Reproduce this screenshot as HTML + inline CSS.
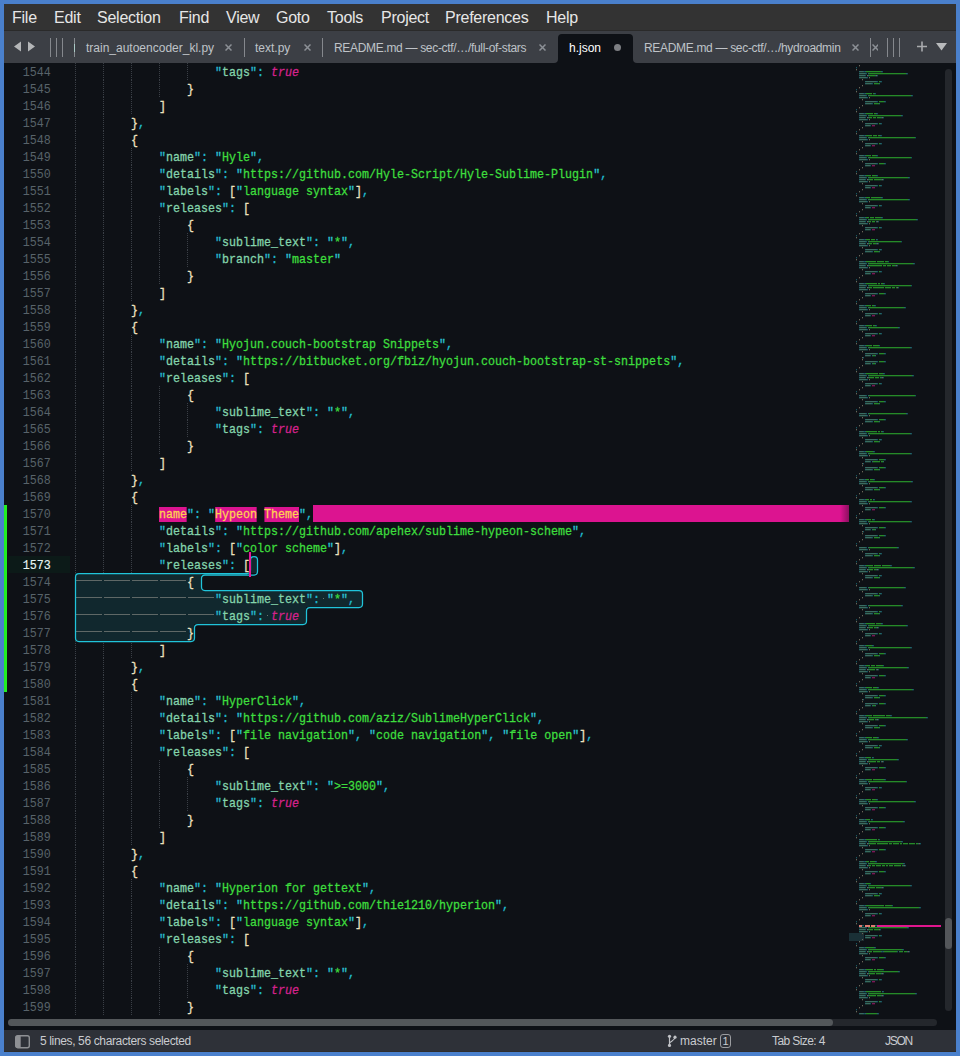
<!DOCTYPE html>
<html><head><meta charset="utf-8">
<style>
html,body{margin:0;padding:0}
body{width:960px;height:1056px;background:#4a80cc;position:relative;overflow:hidden;font-family:"Liberation Sans",sans-serif}
.abs{position:absolute}
#menu{left:4px;top:4px;width:952px;height:26px;background:#333333;border-bottom:1px solid #2a2a2a}
#menu span{position:absolute;top:5px;font-size:16px;letter-spacing:-0.25px;line-height:18px;color:#e6e6e6;white-space:nowrap}
#tabs{left:4px;top:31px;width:952px;height:32px;background:#3c3f45}
.tt{position:absolute;top:10px;font-size:12px;line-height:14px;color:#bfc3c8;white-space:nowrap}
.x{position:absolute;top:13px;width:7px;height:7px;overflow:hidden}.x path{stroke:#8c9096;stroke-width:1.5;fill:none}
.rd{letter-spacing:-0.32px}
.sep{position:absolute;top:7px;width:1px;height:19px;background:#85888d}
#active{left:554px;top:3px;width:75px;height:29px;background:#0e1116;border-radius:4px 4px 0 0}
#editor{left:4px;top:63px;width:952px;height:967px;background:#0e1116;overflow:hidden}
#status{left:4px;top:1030px;width:952px;height:21px;background:#2e3138;border-bottom:1px solid #2f2d2b}
.st{position:absolute;top:4px;font-size:12px;line-height:14px;color:#c9cbcf;white-space:nowrap}
/* code */
.ln{position:absolute;height:17px;line-height:17px;font-family:"Liberation Mono",monospace;font-size:13.5px;transform-origin:0 0;transform:translateY(1px) scaleX(0.86420);white-space:pre;-webkit-text-stroke:0.3px currentColor;color:#dfe6e0}
.ln i{font-style:normal}
.k{color:#84d4ac}
.kq{color:#26bfd2}
.p{color:#20bcd0}
.b{color:#eee2c0}
.sq{color:#2cc4d4}
.s{color:#3ede3e}
.ln i.t{color:#d4228c;font-style:italic}
.hl{background:#dc1490;color:#ffd250}
.num{position:absolute;left:-6.86px;width:57.86px;text-align:right;height:17px;line-height:17px;font-family:"Liberation Mono",monospace;font-size:13.5px;color:#58636a;transform-origin:100% 0;transform:translateY(1px) scaleX(0.8642)}
.num.cur{color:#e8f6f6;-webkit-text-stroke:0.15px currentColor}
.g{position:absolute;width:1px;height:17px;background-image:linear-gradient(#3a3f46 50%,transparent 50%);background-size:1px 2px}
.tabl{position:absolute;width:26px;height:1px;background:#5f6866}
.dot{position:absolute;width:1px;height:1px;background:#6a7470}
#mm b{position:absolute;height:2px;display:block}
.mk{background:linear-gradient(#3a6c60 50%,#1a302c 50%)}.mkq{background:linear-gradient(#2a6468 50%,#16302f 50%)}.mp{background:linear-gradient(#165660 50%,#0f2a30 50%)}.mb{background:linear-gradient(#6a675a 50%,#2e2e2a 50%)}.msq{background:linear-gradient(#2a6468 50%,#16302f 50%)}.ms{background:linear-gradient(#268a28 50%,#12381a 50%)}.mt{background:linear-gradient(#7a1a58 50%,#380e2c 50%)}.mhlm{background:#e07a70}
#mm b.mhl{background:#e0168e;height:2px}
#mm b.msel{background:#1a3036}
</style></head><body>
<div id="menu" class="abs">
<span style="left:8px">File</span>
<span style="left:50px">Edit</span>
<span style="left:93px">Selection</span>
<span style="left:175px">Find</span>
<span style="left:222px">View</span>
<span style="left:272px">Goto</span>
<span style="left:323px">Tools</span>
<span style="left:377px">Project</span>
<span style="left:441px">Preferences</span>
<span style="left:542px">Help</span>
</div>
<div id="tabs" class="abs">
<div class="abs" style="left:548px;top:18px;width:87px;height:14px;background:#0e1116"></div>
<div class="abs" style="left:0;top:0;width:554px;height:32px;background:#3c3f45;border-bottom-right-radius:4px"></div>
<div class="abs" style="left:629px;top:0;width:323px;height:32px;background:#3c3f45;border-bottom-left-radius:4px"></div>
<div id="active" class="abs"></div>
<svg class="abs" style="left:10px;top:10px" width="24" height="12"><path d="M0,5.5 L7,0.5 L7,10.5 Z M14,0.5 L21,5.5 L14,10.5 Z" fill="#b4b6b8"/></svg>
<div class="sep" style="left:46px"></div><div class="sep" style="left:52px"></div><div class="sep" style="left:58px"></div><div class="sep" style="left:70px"></div>
<div class="abs" style="left:70px;top:13px;width:1px;height:8px;background:#a9c9c4"></div>
<div class="tt" style="left:82px">train_autoencoder_kl.py</div><svg class="x" style="left:221px"><path d="M0.5,0.5 L6.5,6.5 M6.5,0.5 L0.5,6.5"/></svg>
<div class="sep" style="left:240px"></div>
<div class="tt" style="left:251px">text.py</div><svg class="x" style="left:300px"><path d="M0.5,0.5 L6.5,6.5 M6.5,0.5 L0.5,6.5"/></svg>
<div class="sep" style="left:318px"></div>
<div class="tt rd" style="left:330px">README.md — sec-ctf/…/full-of-stars</div><svg class="x" style="left:535px"><path d="M0.5,0.5 L6.5,6.5 M6.5,0.5 L0.5,6.5"/></svg>
<div class="tt" style="left:565px;color:#fff">h.json</div>
<div class="abs" style="left:610px;top:13px;width:7px;height:7px;border-radius:50%;background:#7d7f83"></div>
<div class="tt rd" style="left:640px">README.md — sec-ctf/…/hydroadmin</div><svg class="x" style="left:848px"><path d="M0.5,0.5 L6.5,6.5 M6.5,0.5 L0.5,6.5"/></svg>
<div class="sep" style="left:866px"></div><svg class="x" style="left:868px;width:6px"><path d="M0.5,0.5 L6.5,6.5 M6.5,0.5 L0.5,6.5"/></svg>
<div class="sep" style="left:883px"></div><div class="sep" style="left:889px"></div><div class="sep" style="left:895px"></div>
<svg class="abs" style="left:913px;top:10px" width="40" height="14"><path d="M5,0.5 V10.5 M0,5.5 H10" stroke="#a8aaad" stroke-width="1.6"/><path d="M19,2 L30,2 L24.5,9.5 Z" fill="#b8babc"/></svg>
</div>
<div id="editor" class="abs">
 <div class="abs" style="left:0;top:0;width:952px;height:967px;transform:translate(-4px,-63px)">
  <div class="abs" style="left:4px;top:505px;width:3px;height:187px;background:#22ee22"></div>
  <div class="abs" style="left:8px;top:556px;width:62px;height:17px;background:#0c1a18"></div>
  <div class="num" style="top:63px">1544</div>
<div class="num" style="top:80px">1545</div>
<div class="num" style="top:97px">1546</div>
<div class="num" style="top:114px">1547</div>
<div class="num" style="top:131px">1548</div>
<div class="num" style="top:148px">1549</div>
<div class="num" style="top:165px">1550</div>
<div class="num" style="top:182px">1551</div>
<div class="num" style="top:199px">1552</div>
<div class="num" style="top:216px">1553</div>
<div class="num" style="top:233px">1554</div>
<div class="num" style="top:250px">1555</div>
<div class="num" style="top:267px">1556</div>
<div class="num" style="top:284px">1557</div>
<div class="num" style="top:301px">1558</div>
<div class="num" style="top:318px">1559</div>
<div class="num" style="top:335px">1560</div>
<div class="num" style="top:352px">1561</div>
<div class="num" style="top:369px">1562</div>
<div class="num" style="top:386px">1563</div>
<div class="num" style="top:403px">1564</div>
<div class="num" style="top:420px">1565</div>
<div class="num" style="top:437px">1566</div>
<div class="num" style="top:454px">1567</div>
<div class="num" style="top:471px">1568</div>
<div class="num" style="top:488px">1569</div>
<div class="num" style="top:505px">1570</div>
<div class="num" style="top:522px">1571</div>
<div class="num" style="top:539px">1572</div>
<div class="num cur" style="top:556px">1573</div>
<div class="num" style="top:573px">1574</div>
<div class="num" style="top:590px">1575</div>
<div class="num" style="top:607px">1576</div>
<div class="num" style="top:624px">1577</div>
<div class="num" style="top:641px">1578</div>
<div class="num" style="top:658px">1579</div>
<div class="num" style="top:675px">1580</div>
<div class="num" style="top:692px">1581</div>
<div class="num" style="top:709px">1582</div>
<div class="num" style="top:726px">1583</div>
<div class="num" style="top:743px">1584</div>
<div class="num" style="top:760px">1585</div>
<div class="num" style="top:777px">1586</div>
<div class="num" style="top:794px">1587</div>
<div class="num" style="top:811px">1588</div>
<div class="num" style="top:828px">1589</div>
<div class="num" style="top:845px">1590</div>
<div class="num" style="top:862px">1591</div>
<div class="num" style="top:879px">1592</div>
<div class="num" style="top:896px">1593</div>
<div class="num" style="top:913px">1594</div>
<div class="num" style="top:930px">1595</div>
<div class="num" style="top:947px">1596</div>
<div class="num" style="top:964px">1597</div>
<div class="num" style="top:981px">1598</div>
<div class="num" style="top:998px">1599</div>
  <div class="g" style="top:63px;left:75px"></div>
<div class="g" style="top:63px;left:103px"></div>
<div class="g" style="top:63px;left:131px"></div>
<div class="g" style="top:63px;left:159px"></div>
<div class="g" style="top:63px;left:187px"></div>
<div class="g" style="top:80px;left:75px"></div>
<div class="g" style="top:80px;left:103px"></div>
<div class="g" style="top:80px;left:131px"></div>
<div class="g" style="top:80px;left:159px"></div>
<div class="g" style="top:97px;left:75px"></div>
<div class="g" style="top:97px;left:103px"></div>
<div class="g" style="top:97px;left:131px"></div>
<div class="g" style="top:114px;left:75px"></div>
<div class="g" style="top:114px;left:103px"></div>
<div class="g" style="top:131px;left:75px"></div>
<div class="g" style="top:131px;left:103px"></div>
<div class="g" style="top:148px;left:75px"></div>
<div class="g" style="top:148px;left:103px"></div>
<div class="g" style="top:148px;left:131px"></div>
<div class="g" style="top:165px;left:75px"></div>
<div class="g" style="top:165px;left:103px"></div>
<div class="g" style="top:165px;left:131px"></div>
<div class="g" style="top:182px;left:75px"></div>
<div class="g" style="top:182px;left:103px"></div>
<div class="g" style="top:182px;left:131px"></div>
<div class="g" style="top:199px;left:75px"></div>
<div class="g" style="top:199px;left:103px"></div>
<div class="g" style="top:199px;left:131px"></div>
<div class="g" style="top:216px;left:75px"></div>
<div class="g" style="top:216px;left:103px"></div>
<div class="g" style="top:216px;left:131px"></div>
<div class="g" style="top:216px;left:159px"></div>
<div class="g" style="top:233px;left:75px"></div>
<div class="g" style="top:233px;left:103px"></div>
<div class="g" style="top:233px;left:131px"></div>
<div class="g" style="top:233px;left:159px"></div>
<div class="g" style="top:233px;left:187px"></div>
<div class="g" style="top:250px;left:75px"></div>
<div class="g" style="top:250px;left:103px"></div>
<div class="g" style="top:250px;left:131px"></div>
<div class="g" style="top:250px;left:159px"></div>
<div class="g" style="top:250px;left:187px"></div>
<div class="g" style="top:267px;left:75px"></div>
<div class="g" style="top:267px;left:103px"></div>
<div class="g" style="top:267px;left:131px"></div>
<div class="g" style="top:267px;left:159px"></div>
<div class="g" style="top:284px;left:75px"></div>
<div class="g" style="top:284px;left:103px"></div>
<div class="g" style="top:284px;left:131px"></div>
<div class="g" style="top:301px;left:75px"></div>
<div class="g" style="top:301px;left:103px"></div>
<div class="g" style="top:318px;left:75px"></div>
<div class="g" style="top:318px;left:103px"></div>
<div class="g" style="top:335px;left:75px"></div>
<div class="g" style="top:335px;left:103px"></div>
<div class="g" style="top:335px;left:131px"></div>
<div class="g" style="top:352px;left:75px"></div>
<div class="g" style="top:352px;left:103px"></div>
<div class="g" style="top:352px;left:131px"></div>
<div class="g" style="top:369px;left:75px"></div>
<div class="g" style="top:369px;left:103px"></div>
<div class="g" style="top:369px;left:131px"></div>
<div class="g" style="top:386px;left:75px"></div>
<div class="g" style="top:386px;left:103px"></div>
<div class="g" style="top:386px;left:131px"></div>
<div class="g" style="top:386px;left:159px"></div>
<div class="g" style="top:403px;left:75px"></div>
<div class="g" style="top:403px;left:103px"></div>
<div class="g" style="top:403px;left:131px"></div>
<div class="g" style="top:403px;left:159px"></div>
<div class="g" style="top:403px;left:187px"></div>
<div class="g" style="top:420px;left:75px"></div>
<div class="g" style="top:420px;left:103px"></div>
<div class="g" style="top:420px;left:131px"></div>
<div class="g" style="top:420px;left:159px"></div>
<div class="g" style="top:420px;left:187px"></div>
<div class="g" style="top:437px;left:75px"></div>
<div class="g" style="top:437px;left:103px"></div>
<div class="g" style="top:437px;left:131px"></div>
<div class="g" style="top:437px;left:159px"></div>
<div class="g" style="top:454px;left:75px"></div>
<div class="g" style="top:454px;left:103px"></div>
<div class="g" style="top:454px;left:131px"></div>
<div class="g" style="top:471px;left:75px"></div>
<div class="g" style="top:471px;left:103px"></div>
<div class="g" style="top:488px;left:75px"></div>
<div class="g" style="top:488px;left:103px"></div>
<div class="g" style="top:505px;left:75px"></div>
<div class="g" style="top:505px;left:103px"></div>
<div class="g" style="top:505px;left:131px"></div>
<div class="g" style="top:522px;left:75px"></div>
<div class="g" style="top:522px;left:103px"></div>
<div class="g" style="top:522px;left:131px"></div>
<div class="g" style="top:539px;left:75px"></div>
<div class="g" style="top:539px;left:103px"></div>
<div class="g" style="top:539px;left:131px"></div>
<div class="g" style="top:556px;left:75px"></div>
<div class="g" style="top:556px;left:103px"></div>
<div class="g" style="top:556px;left:131px"></div>
<div class="g" style="top:573px;left:75px"></div>
<div class="g" style="top:573px;left:103px"></div>
<div class="g" style="top:573px;left:131px"></div>
<div class="g" style="top:573px;left:159px"></div>
<div class="g" style="top:590px;left:75px"></div>
<div class="g" style="top:590px;left:103px"></div>
<div class="g" style="top:590px;left:131px"></div>
<div class="g" style="top:590px;left:159px"></div>
<div class="g" style="top:590px;left:187px"></div>
<div class="g" style="top:607px;left:75px"></div>
<div class="g" style="top:607px;left:103px"></div>
<div class="g" style="top:607px;left:131px"></div>
<div class="g" style="top:607px;left:159px"></div>
<div class="g" style="top:607px;left:187px"></div>
<div class="g" style="top:624px;left:75px"></div>
<div class="g" style="top:624px;left:103px"></div>
<div class="g" style="top:624px;left:131px"></div>
<div class="g" style="top:624px;left:159px"></div>
<div class="g" style="top:641px;left:75px"></div>
<div class="g" style="top:641px;left:103px"></div>
<div class="g" style="top:641px;left:131px"></div>
<div class="g" style="top:658px;left:75px"></div>
<div class="g" style="top:658px;left:103px"></div>
<div class="g" style="top:675px;left:75px"></div>
<div class="g" style="top:675px;left:103px"></div>
<div class="g" style="top:692px;left:75px"></div>
<div class="g" style="top:692px;left:103px"></div>
<div class="g" style="top:692px;left:131px"></div>
<div class="g" style="top:709px;left:75px"></div>
<div class="g" style="top:709px;left:103px"></div>
<div class="g" style="top:709px;left:131px"></div>
<div class="g" style="top:726px;left:75px"></div>
<div class="g" style="top:726px;left:103px"></div>
<div class="g" style="top:726px;left:131px"></div>
<div class="g" style="top:743px;left:75px"></div>
<div class="g" style="top:743px;left:103px"></div>
<div class="g" style="top:743px;left:131px"></div>
<div class="g" style="top:760px;left:75px"></div>
<div class="g" style="top:760px;left:103px"></div>
<div class="g" style="top:760px;left:131px"></div>
<div class="g" style="top:760px;left:159px"></div>
<div class="g" style="top:777px;left:75px"></div>
<div class="g" style="top:777px;left:103px"></div>
<div class="g" style="top:777px;left:131px"></div>
<div class="g" style="top:777px;left:159px"></div>
<div class="g" style="top:777px;left:187px"></div>
<div class="g" style="top:794px;left:75px"></div>
<div class="g" style="top:794px;left:103px"></div>
<div class="g" style="top:794px;left:131px"></div>
<div class="g" style="top:794px;left:159px"></div>
<div class="g" style="top:794px;left:187px"></div>
<div class="g" style="top:811px;left:75px"></div>
<div class="g" style="top:811px;left:103px"></div>
<div class="g" style="top:811px;left:131px"></div>
<div class="g" style="top:811px;left:159px"></div>
<div class="g" style="top:828px;left:75px"></div>
<div class="g" style="top:828px;left:103px"></div>
<div class="g" style="top:828px;left:131px"></div>
<div class="g" style="top:845px;left:75px"></div>
<div class="g" style="top:845px;left:103px"></div>
<div class="g" style="top:862px;left:75px"></div>
<div class="g" style="top:862px;left:103px"></div>
<div class="g" style="top:879px;left:75px"></div>
<div class="g" style="top:879px;left:103px"></div>
<div class="g" style="top:879px;left:131px"></div>
<div class="g" style="top:896px;left:75px"></div>
<div class="g" style="top:896px;left:103px"></div>
<div class="g" style="top:896px;left:131px"></div>
<div class="g" style="top:913px;left:75px"></div>
<div class="g" style="top:913px;left:103px"></div>
<div class="g" style="top:913px;left:131px"></div>
<div class="g" style="top:930px;left:75px"></div>
<div class="g" style="top:930px;left:103px"></div>
<div class="g" style="top:930px;left:131px"></div>
<div class="g" style="top:947px;left:75px"></div>
<div class="g" style="top:947px;left:103px"></div>
<div class="g" style="top:947px;left:131px"></div>
<div class="g" style="top:947px;left:159px"></div>
<div class="g" style="top:964px;left:75px"></div>
<div class="g" style="top:964px;left:103px"></div>
<div class="g" style="top:964px;left:131px"></div>
<div class="g" style="top:964px;left:159px"></div>
<div class="g" style="top:964px;left:187px"></div>
<div class="g" style="top:981px;left:75px"></div>
<div class="g" style="top:981px;left:103px"></div>
<div class="g" style="top:981px;left:131px"></div>
<div class="g" style="top:981px;left:159px"></div>
<div class="g" style="top:981px;left:187px"></div>
<div class="g" style="top:998px;left:75px"></div>
<div class="g" style="top:998px;left:103px"></div>
<div class="g" style="top:998px;left:131px"></div>
<div class="g" style="top:998px;left:159px"></div>
  <svg class="abs" style="left:0;top:0" width="960" height="1056">
   <g fill="#11282e"><rect x="250" y="556" width="7" height="17"/><rect x="75" y="573" width="126" height="17"/><rect x="75" y="590" width="287" height="17"/><rect x="75" y="607" width="231" height="17"/><rect x="75" y="624" width="119" height="17"/></g>
  </svg>
  <div class="tabl" style="top:580px;left:76px"></div>
<div class="tabl" style="top:580px;left:104px"></div>
<div class="tabl" style="top:580px;left:132px"></div>
<div class="tabl" style="top:580px;left:160px"></div>
<div class="tabl" style="top:597px;left:76px"></div>
<div class="tabl" style="top:597px;left:104px"></div>
<div class="tabl" style="top:597px;left:132px"></div>
<div class="tabl" style="top:597px;left:160px"></div>
<div class="tabl" style="top:597px;left:188px"></div>
<div class="tabl" style="top:614px;left:76px"></div>
<div class="tabl" style="top:614px;left:104px"></div>
<div class="tabl" style="top:614px;left:132px"></div>
<div class="tabl" style="top:614px;left:160px"></div>
<div class="tabl" style="top:614px;left:188px"></div>
<div class="tabl" style="top:631px;left:76px"></div>
<div class="tabl" style="top:631px;left:104px"></div>
<div class="tabl" style="top:631px;left:132px"></div>
<div class="tabl" style="top:631px;left:160px"></div>
<div class="dot" style="top:598px;left:323px"></div>
<div class="dot" style="top:615px;left:267px"></div>
  <div class="abs" style="left:313px;top:505px;width:536px;height:17px;background:linear-gradient(90deg,#dc1490 0,#dc1490 527px,#8c0f60 536px)"></div>
  <div class="ln" style="top:63px;left:215px"><i class="kq">&quot;</i><i class="k">tags</i><i class="kq">&quot;</i><i class="p">:</i> <i class="t">true</i></div>
<div class="ln" style="top:80px;left:187px"><i class="b">}</i></div>
<div class="ln" style="top:97px;left:159px"><i class="b">]</i></div>
<div class="ln" style="top:114px;left:131px"><i class="b">}</i><i class="p">,</i></div>
<div class="ln" style="top:131px;left:131px"><i class="b">{</i></div>
<div class="ln" style="top:148px;left:159px"><i class="kq">&quot;</i><i class="k">name</i><i class="kq">&quot;</i><i class="p">:</i> <i class="sq">&quot;</i><i class="s">Hyle</i><i class="sq">&quot;</i><i class="p">,</i></div>
<div class="ln" style="top:165px;left:159px"><i class="kq">&quot;</i><i class="k">details</i><i class="kq">&quot;</i><i class="p">:</i> <i class="sq">&quot;</i><i class="s">https://github.com/Hyle-Script/Hyle-Sublime-Plugin</i><i class="sq">&quot;</i><i class="p">,</i></div>
<div class="ln" style="top:182px;left:159px"><i class="kq">&quot;</i><i class="k">labels</i><i class="kq">&quot;</i><i class="p">:</i> <i class="b">[</i><i class="sq">&quot;</i><i class="s">language syntax</i><i class="sq">&quot;</i><i class="b">]</i><i class="p">,</i></div>
<div class="ln" style="top:199px;left:159px"><i class="kq">&quot;</i><i class="k">releases</i><i class="kq">&quot;</i><i class="p">:</i> <i class="b">[</i></div>
<div class="ln" style="top:216px;left:187px"><i class="b">{</i></div>
<div class="ln" style="top:233px;left:215px"><i class="kq">&quot;</i><i class="k">sublime_text</i><i class="kq">&quot;</i><i class="p">:</i> <i class="sq">&quot;</i><i class="s">*</i><i class="sq">&quot;</i><i class="p">,</i></div>
<div class="ln" style="top:250px;left:215px"><i class="kq">&quot;</i><i class="k">branch</i><i class="kq">&quot;</i><i class="p">:</i> <i class="sq">&quot;</i><i class="s">master</i><i class="sq">&quot;</i></div>
<div class="ln" style="top:267px;left:187px"><i class="b">}</i></div>
<div class="ln" style="top:284px;left:159px"><i class="b">]</i></div>
<div class="ln" style="top:301px;left:131px"><i class="b">}</i><i class="p">,</i></div>
<div class="ln" style="top:318px;left:131px"><i class="b">{</i></div>
<div class="ln" style="top:335px;left:159px"><i class="kq">&quot;</i><i class="k">name</i><i class="kq">&quot;</i><i class="p">:</i> <i class="sq">&quot;</i><i class="s">Hyojun.couch-bootstrap Snippets</i><i class="sq">&quot;</i><i class="p">,</i></div>
<div class="ln" style="top:352px;left:159px"><i class="kq">&quot;</i><i class="k">details</i><i class="kq">&quot;</i><i class="p">:</i> <i class="sq">&quot;</i><i class="s">https://bitbucket.org/fbiz/hyojun.couch-bootstrap-st-snippets</i><i class="sq">&quot;</i><i class="p">,</i></div>
<div class="ln" style="top:369px;left:159px"><i class="kq">&quot;</i><i class="k">releases</i><i class="kq">&quot;</i><i class="p">:</i> <i class="b">[</i></div>
<div class="ln" style="top:386px;left:187px"><i class="b">{</i></div>
<div class="ln" style="top:403px;left:215px"><i class="kq">&quot;</i><i class="k">sublime_text</i><i class="kq">&quot;</i><i class="p">:</i> <i class="sq">&quot;</i><i class="s">*</i><i class="sq">&quot;</i><i class="p">,</i></div>
<div class="ln" style="top:420px;left:215px"><i class="kq">&quot;</i><i class="k">tags</i><i class="kq">&quot;</i><i class="p">:</i> <i class="t">true</i></div>
<div class="ln" style="top:437px;left:187px"><i class="b">}</i></div>
<div class="ln" style="top:454px;left:159px"><i class="b">]</i></div>
<div class="ln" style="top:471px;left:131px"><i class="b">}</i><i class="p">,</i></div>
<div class="ln" style="top:488px;left:131px"><i class="b">{</i></div>
<div class="ln" style="top:505px;left:159px"><i class="hl">name</i><i class="kq">"</i><i class="p">:</i> <i class="sq">"</i><i class="hl">Hypeon</i> <i class="hl">Theme</i><i class="sq">"</i><i class="p">,</i></div>
<div class="ln" style="top:522px;left:159px"><i class="kq">&quot;</i><i class="k">details</i><i class="kq">&quot;</i><i class="p">:</i> <i class="sq">&quot;</i><i class="s">https://github.com/apehex/sublime-hypeon-scheme</i><i class="sq">&quot;</i><i class="p">,</i></div>
<div class="ln" style="top:539px;left:159px"><i class="kq">&quot;</i><i class="k">labels</i><i class="kq">&quot;</i><i class="p">:</i> <i class="b">[</i><i class="sq">&quot;</i><i class="s">color scheme</i><i class="sq">&quot;</i><i class="b">]</i><i class="p">,</i></div>
<div class="ln" style="top:556px;left:159px"><i class="kq">&quot;</i><i class="k">releases</i><i class="kq">&quot;</i><i class="p">:</i> <i class="b">[</i></div>
<div class="ln" style="top:573px;left:187px"><i class="b">{</i></div>
<div class="ln" style="top:590px;left:215px"><i class="kq">&quot;</i><i class="k">sublime_text</i><i class="kq">&quot;</i><i class="p">:</i> <i class="sq">&quot;</i><i class="s">*</i><i class="sq">&quot;</i><i class="p">,</i></div>
<div class="ln" style="top:607px;left:215px"><i class="kq">&quot;</i><i class="k">tags</i><i class="kq">&quot;</i><i class="p">:</i> <i class="t">true</i></div>
<div class="ln" style="top:624px;left:187px"><i class="b">}</i></div>
<div class="ln" style="top:641px;left:159px"><i class="b">]</i></div>
<div class="ln" style="top:658px;left:131px"><i class="b">}</i><i class="p">,</i></div>
<div class="ln" style="top:675px;left:131px"><i class="b">{</i></div>
<div class="ln" style="top:692px;left:159px"><i class="kq">&quot;</i><i class="k">name</i><i class="kq">&quot;</i><i class="p">:</i> <i class="sq">&quot;</i><i class="s">HyperClick</i><i class="sq">&quot;</i><i class="p">,</i></div>
<div class="ln" style="top:709px;left:159px"><i class="kq">&quot;</i><i class="k">details</i><i class="kq">&quot;</i><i class="p">:</i> <i class="sq">&quot;</i><i class="s">https://github.com/aziz/SublimeHyperClick</i><i class="sq">&quot;</i><i class="p">,</i></div>
<div class="ln" style="top:726px;left:159px"><i class="kq">&quot;</i><i class="k">labels</i><i class="kq">&quot;</i><i class="p">:</i> <i class="b">[</i><i class="sq">&quot;</i><i class="s">file navigation</i><i class="sq">&quot;</i><i class="p">,</i> <i class="sq">&quot;</i><i class="s">code navigation</i><i class="sq">&quot;</i><i class="p">,</i> <i class="sq">&quot;</i><i class="s">file open</i><i class="sq">&quot;</i><i class="b">]</i><i class="p">,</i></div>
<div class="ln" style="top:743px;left:159px"><i class="kq">&quot;</i><i class="k">releases</i><i class="kq">&quot;</i><i class="p">:</i> <i class="b">[</i></div>
<div class="ln" style="top:760px;left:187px"><i class="b">{</i></div>
<div class="ln" style="top:777px;left:215px"><i class="kq">&quot;</i><i class="k">sublime_text</i><i class="kq">&quot;</i><i class="p">:</i> <i class="sq">&quot;</i><i class="s">&gt;=3000</i><i class="sq">&quot;</i><i class="p">,</i></div>
<div class="ln" style="top:794px;left:215px"><i class="kq">&quot;</i><i class="k">tags</i><i class="kq">&quot;</i><i class="p">:</i> <i class="t">true</i></div>
<div class="ln" style="top:811px;left:187px"><i class="b">}</i></div>
<div class="ln" style="top:828px;left:159px"><i class="b">]</i></div>
<div class="ln" style="top:845px;left:131px"><i class="b">}</i><i class="p">,</i></div>
<div class="ln" style="top:862px;left:131px"><i class="b">{</i></div>
<div class="ln" style="top:879px;left:159px"><i class="kq">&quot;</i><i class="k">name</i><i class="kq">&quot;</i><i class="p">:</i> <i class="sq">&quot;</i><i class="s">Hyperion for gettext</i><i class="sq">&quot;</i><i class="p">,</i></div>
<div class="ln" style="top:896px;left:159px"><i class="kq">&quot;</i><i class="k">details</i><i class="kq">&quot;</i><i class="p">:</i> <i class="sq">&quot;</i><i class="s">https://github.com/thie1210/hyperion</i><i class="sq">&quot;</i><i class="p">,</i></div>
<div class="ln" style="top:913px;left:159px"><i class="kq">&quot;</i><i class="k">labels</i><i class="kq">&quot;</i><i class="p">:</i> <i class="b">[</i><i class="sq">&quot;</i><i class="s">language syntax</i><i class="sq">&quot;</i><i class="b">]</i><i class="p">,</i></div>
<div class="ln" style="top:930px;left:159px"><i class="kq">&quot;</i><i class="k">releases</i><i class="kq">&quot;</i><i class="p">:</i> <i class="b">[</i></div>
<div class="ln" style="top:947px;left:187px"><i class="b">{</i></div>
<div class="ln" style="top:964px;left:215px"><i class="kq">&quot;</i><i class="k">sublime_text</i><i class="kq">&quot;</i><i class="p">:</i> <i class="sq">&quot;</i><i class="s">*</i><i class="sq">&quot;</i><i class="p">,</i></div>
<div class="ln" style="top:981px;left:215px"><i class="kq">&quot;</i><i class="k">tags</i><i class="kq">&quot;</i><i class="p">:</i> <i class="t">true</i></div>
<div class="ln" style="top:998px;left:187px"><i class="b">}</i></div>
  <svg class="abs" style="left:0;top:0" width="960" height="1056">
   <path d="M79.00,573.50 L247.00,573.50 Q250.50,573.50 250.50,570.00 L250.50,560.00 Q250.50,556.50 254.00,556.50 L254.00,556.50 Q257.50,556.50 257.50,560.00 L257.50,571.50 Q257.50,575.00 254.00,575.00 L205.00,575.00 Q201.50,575.00 201.50,578.50 L201.50,587.00 Q201.50,590.50 205.00,590.50 L359.00,590.50 Q362.50,590.50 362.50,594.00 L362.50,604.00 Q362.50,607.50 359.00,607.50 L310.00,607.50 Q306.50,607.50 306.50,611.00 L306.50,621.00 Q306.50,624.50 303.00,624.50 L198.00,624.50 Q194.50,624.50 194.50,628.00 L194.50,638.00 Q194.50,641.50 191.00,641.50 L79.00,641.50 Q75.50,641.50 75.50,638.00 L75.50,577.00 Q75.50,573.50 79.00,573.50 Z" fill="none" stroke="#20c4da" stroke-width="1.25" stroke-linejoin="round"/>
  </svg>
  <div class="abs" style="left:249px;top:552px;width:2px;height:25px;background:#e8179a"></div>
  <div id="mm" class="abs" style="left:0;top:0;width:960px;height:1056px"><b class="msel" style="left:849px;top:933px;width:15px;height:8px"></b><b class="mb" style="left:859px;top:65px;width:1px"></b>
<b class="mb" style="left:856px;top:67px;width:1px"></b>
<b class="mp" style="left:856px;top:67px;width:1px"></b>
<b class="mb" style="left:856px;top:69px;width:1px"></b>
<b class="mkq" style="left:859px;top:71px;width:1px"></b>
<b class="mk" style="left:860px;top:71px;width:3px"></b>
<b class="mkq" style="left:863px;top:71px;width:1px"></b>
<b class="mp" style="left:864px;top:71px;width:1px"></b>
<b class="msq" style="left:865px;top:71px;width:1px"></b>
<b class="ms" style="left:866px;top:71px;width:8px"></b>
<b class="ms" style="left:874px;top:71px;width:7px"></b>
<b class="msq" style="left:881px;top:71px;width:1px"></b>
<b class="mp" style="left:882px;top:71px;width:1px"></b>
<b class="mkq" style="left:859px;top:73px;width:1px"></b>
<b class="mk" style="left:860px;top:73px;width:5px"></b>
<b class="mkq" style="left:865px;top:73px;width:1px"></b>
<b class="mp" style="left:866px;top:73px;width:1px"></b>
<b class="msq" style="left:868px;top:73px;width:1px"></b>
<b class="ms" style="left:869px;top:73px;width:37px"></b>
<b class="msq" style="left:906px;top:73px;width:1px"></b>
<b class="mp" style="left:907px;top:73px;width:1px"></b>
<b class="mkq" style="left:859px;top:75px;width:1px"></b>
<b class="mk" style="left:860px;top:75px;width:5px"></b>
<b class="mkq" style="left:865px;top:75px;width:1px"></b>
<b class="mp" style="left:865px;top:75px;width:1px"></b>
<b class="mb" style="left:867px;top:75px;width:1px"></b>
<b class="msq" style="left:868px;top:75px;width:1px"></b>
<b class="ms" style="left:869px;top:75px;width:6px"></b>
<b class="msq" style="left:875px;top:75px;width:1px"></b>
<b class="mb" style="left:876px;top:75px;width:1px"></b>
<b class="mp" style="left:877px;top:75px;width:1px"></b>
<b class="mkq" style="left:859px;top:77px;width:1px"></b>
<b class="mk" style="left:860px;top:77px;width:6px"></b>
<b class="mkq" style="left:866px;top:77px;width:1px"></b>
<b class="mp" style="left:867px;top:77px;width:1px"></b>
<b class="mb" style="left:869px;top:77px;width:1px"></b>
<b class="mb" style="left:862px;top:79px;width:1px"></b>
<b class="mkq" style="left:865px;top:81px;width:1px"></b>
<b class="mk" style="left:866px;top:81px;width:10px"></b>
<b class="mkq" style="left:876px;top:81px;width:1px"></b>
<b class="mp" style="left:877px;top:81px;width:1px"></b>
<b class="msq" style="left:879px;top:81px;width:1px"></b>
<b class="ms" style="left:879px;top:81px;width:1px"></b>
<b class="msq" style="left:880px;top:81px;width:1px"></b>
<b class="mp" style="left:881px;top:81px;width:1px"></b>
<b class="mkq" style="left:865px;top:83px;width:1px"></b>
<b class="mk" style="left:866px;top:83px;width:5px"></b>
<b class="mkq" style="left:871px;top:83px;width:1px"></b>
<b class="mp" style="left:872px;top:83px;width:1px"></b>
<b class="msq" style="left:874px;top:83px;width:1px"></b>
<b class="ms" style="left:874px;top:83px;width:5px"></b>
<b class="msq" style="left:879px;top:83px;width:1px"></b>
<b class="mb" style="left:862px;top:85px;width:1px"></b>
<b class="mb" style="left:859px;top:87px;width:1px"></b>
<b class="mb" style="left:856px;top:89px;width:1px"></b>
<b class="mp" style="left:856px;top:89px;width:1px"></b>
<b class="mb" style="left:856px;top:91px;width:1px"></b>
<b class="mkq" style="left:859px;top:93px;width:1px"></b>
<b class="mk" style="left:860px;top:93px;width:3px"></b>
<b class="mkq" style="left:863px;top:93px;width:1px"></b>
<b class="mp" style="left:864px;top:93px;width:1px"></b>
<b class="msq" style="left:865px;top:93px;width:1px"></b>
<b class="ms" style="left:866px;top:93px;width:6px"></b>
<b class="ms" style="left:873px;top:93px;width:1px"></b>
<b class="msq" style="left:874px;top:93px;width:1px"></b>
<b class="mp" style="left:875px;top:93px;width:1px"></b>
<b class="mkq" style="left:859px;top:95px;width:1px"></b>
<b class="mk" style="left:860px;top:95px;width:5px"></b>
<b class="mkq" style="left:865px;top:95px;width:1px"></b>
<b class="mp" style="left:866px;top:95px;width:1px"></b>
<b class="msq" style="left:868px;top:95px;width:1px"></b>
<b class="ms" style="left:869px;top:95px;width:42px"></b>
<b class="msq" style="left:911px;top:95px;width:1px"></b>
<b class="mp" style="left:912px;top:95px;width:1px"></b>
<b class="mkq" style="left:859px;top:97px;width:1px"></b>
<b class="mk" style="left:860px;top:97px;width:6px"></b>
<b class="mkq" style="left:866px;top:97px;width:1px"></b>
<b class="mp" style="left:867px;top:97px;width:1px"></b>
<b class="mb" style="left:869px;top:97px;width:1px"></b>
<b class="mb" style="left:862px;top:99px;width:1px"></b>
<b class="mkq" style="left:865px;top:101px;width:1px"></b>
<b class="mk" style="left:866px;top:101px;width:10px"></b>
<b class="mkq" style="left:876px;top:101px;width:1px"></b>
<b class="mp" style="left:877px;top:101px;width:1px"></b>
<b class="msq" style="left:879px;top:101px;width:1px"></b>
<b class="ms" style="left:879px;top:101px;width:5px"></b>
<b class="msq" style="left:884px;top:101px;width:1px"></b>
<b class="mp" style="left:885px;top:101px;width:1px"></b>
<b class="mkq" style="left:865px;top:103px;width:1px"></b>
<b class="mk" style="left:866px;top:103px;width:5px"></b>
<b class="mkq" style="left:871px;top:103px;width:1px"></b>
<b class="mp" style="left:872px;top:103px;width:1px"></b>
<b class="msq" style="left:874px;top:103px;width:1px"></b>
<b class="ms" style="left:874px;top:103px;width:5px"></b>
<b class="msq" style="left:879px;top:103px;width:1px"></b>
<b class="mb" style="left:862px;top:105px;width:1px"></b>
<b class="mb" style="left:859px;top:107px;width:1px"></b>
<b class="mb" style="left:856px;top:109px;width:1px"></b>
<b class="mp" style="left:856px;top:109px;width:1px"></b>
<b class="mb" style="left:856px;top:111px;width:1px"></b>
<b class="mkq" style="left:859px;top:113px;width:1px"></b>
<b class="mk" style="left:860px;top:113px;width:3px"></b>
<b class="mkq" style="left:863px;top:113px;width:1px"></b>
<b class="mp" style="left:864px;top:113px;width:1px"></b>
<b class="msq" style="left:865px;top:113px;width:1px"></b>
<b class="ms" style="left:866px;top:113px;width:7px"></b>
<b class="ms" style="left:874px;top:113px;width:2px"></b>
<b class="msq" style="left:876px;top:113px;width:1px"></b>
<b class="mp" style="left:877px;top:113px;width:1px"></b>
<b class="mkq" style="left:859px;top:115px;width:1px"></b>
<b class="mk" style="left:860px;top:115px;width:5px"></b>
<b class="mkq" style="left:865px;top:115px;width:1px"></b>
<b class="mp" style="left:866px;top:115px;width:1px"></b>
<b class="msq" style="left:868px;top:115px;width:1px"></b>
<b class="ms" style="left:869px;top:115px;width:32px"></b>
<b class="msq" style="left:901px;top:115px;width:1px"></b>
<b class="mp" style="left:902px;top:115px;width:1px"></b>
<b class="mkq" style="left:859px;top:117px;width:1px"></b>
<b class="mk" style="left:860px;top:117px;width:5px"></b>
<b class="mkq" style="left:865px;top:117px;width:1px"></b>
<b class="mp" style="left:865px;top:117px;width:1px"></b>
<b class="mb" style="left:867px;top:117px;width:1px"></b>
<b class="msq" style="left:868px;top:117px;width:1px"></b>
<b class="ms" style="left:869px;top:117px;width:3px"></b>
<b class="ms" style="left:873px;top:117px;width:3px"></b>
<b class="ms" style="left:877px;top:117px;width:4px"></b>
<b class="msq" style="left:881px;top:117px;width:1px"></b>
<b class="mb" style="left:882px;top:117px;width:1px"></b>
<b class="mp" style="left:883px;top:117px;width:1px"></b>
<b class="mkq" style="left:859px;top:119px;width:1px"></b>
<b class="mk" style="left:860px;top:119px;width:6px"></b>
<b class="mkq" style="left:866px;top:119px;width:1px"></b>
<b class="mp" style="left:867px;top:119px;width:1px"></b>
<b class="mb" style="left:869px;top:119px;width:1px"></b>
<b class="mb" style="left:862px;top:121px;width:1px"></b>
<b class="mkq" style="left:865px;top:123px;width:1px"></b>
<b class="mk" style="left:866px;top:123px;width:10px"></b>
<b class="mkq" style="left:876px;top:123px;width:1px"></b>
<b class="mp" style="left:877px;top:123px;width:1px"></b>
<b class="msq" style="left:879px;top:123px;width:1px"></b>
<b class="ms" style="left:879px;top:123px;width:1px"></b>
<b class="msq" style="left:880px;top:123px;width:1px"></b>
<b class="mp" style="left:881px;top:123px;width:1px"></b>
<b class="mkq" style="left:865px;top:125px;width:1px"></b>
<b class="mk" style="left:866px;top:125px;width:4px"></b>
<b class="mkq" style="left:870px;top:125px;width:1px"></b>
<b class="mp" style="left:870px;top:125px;width:1px"></b>
<b class="mt" style="left:872px;top:125px;width:3px"></b>
<b class="mb" style="left:862px;top:127px;width:1px"></b>
<b class="mb" style="left:859px;top:129px;width:1px"></b>
<b class="mb" style="left:856px;top:131px;width:1px"></b>
<b class="mp" style="left:856px;top:131px;width:1px"></b>
<b class="mb" style="left:856px;top:133px;width:1px"></b>
<b class="mkq" style="left:859px;top:135px;width:1px"></b>
<b class="mk" style="left:860px;top:135px;width:3px"></b>
<b class="mkq" style="left:863px;top:135px;width:1px"></b>
<b class="mp" style="left:864px;top:135px;width:1px"></b>
<b class="msq" style="left:865px;top:135px;width:1px"></b>
<b class="ms" style="left:866px;top:135px;width:6px"></b>
<b class="ms" style="left:873px;top:135px;width:4px"></b>
<b class="ms" style="left:878px;top:135px;width:2px"></b>
<b class="msq" style="left:880px;top:135px;width:1px"></b>
<b class="mp" style="left:881px;top:135px;width:1px"></b>
<b class="mkq" style="left:859px;top:137px;width:1px"></b>
<b class="mk" style="left:860px;top:137px;width:5px"></b>
<b class="mkq" style="left:865px;top:137px;width:1px"></b>
<b class="mp" style="left:866px;top:137px;width:1px"></b>
<b class="msq" style="left:868px;top:137px;width:1px"></b>
<b class="ms" style="left:869px;top:137px;width:46px"></b>
<b class="msq" style="left:915px;top:137px;width:1px"></b>
<b class="mp" style="left:915px;top:137px;width:1px"></b>
<b class="mkq" style="left:859px;top:139px;width:1px"></b>
<b class="mk" style="left:860px;top:139px;width:6px"></b>
<b class="mkq" style="left:866px;top:139px;width:1px"></b>
<b class="mp" style="left:867px;top:139px;width:1px"></b>
<b class="mb" style="left:869px;top:139px;width:1px"></b>
<b class="mb" style="left:862px;top:141px;width:1px"></b>
<b class="mkq" style="left:865px;top:143px;width:1px"></b>
<b class="mk" style="left:866px;top:143px;width:10px"></b>
<b class="mkq" style="left:876px;top:143px;width:1px"></b>
<b class="mp" style="left:877px;top:143px;width:1px"></b>
<b class="msq" style="left:879px;top:143px;width:1px"></b>
<b class="ms" style="left:879px;top:143px;width:1px"></b>
<b class="msq" style="left:880px;top:143px;width:1px"></b>
<b class="mp" style="left:881px;top:143px;width:1px"></b>
<b class="mkq" style="left:865px;top:145px;width:1px"></b>
<b class="mk" style="left:866px;top:145px;width:4px"></b>
<b class="mkq" style="left:870px;top:145px;width:1px"></b>
<b class="mp" style="left:870px;top:145px;width:1px"></b>
<b class="mt" style="left:872px;top:145px;width:3px"></b>
<b class="mb" style="left:862px;top:147px;width:1px"></b>
<b class="mb" style="left:859px;top:149px;width:1px"></b>
<b class="mb" style="left:856px;top:151px;width:1px"></b>
<b class="mp" style="left:856px;top:151px;width:1px"></b>
<b class="mb" style="left:856px;top:153px;width:1px"></b>
<b class="mkq" style="left:859px;top:155px;width:1px"></b>
<b class="mk" style="left:860px;top:155px;width:3px"></b>
<b class="mkq" style="left:863px;top:155px;width:1px"></b>
<b class="mp" style="left:864px;top:155px;width:1px"></b>
<b class="msq" style="left:865px;top:155px;width:1px"></b>
<b class="ms" style="left:866px;top:155px;width:5px"></b>
<b class="ms" style="left:872px;top:155px;width:4px"></b>
<b class="msq" style="left:876px;top:155px;width:1px"></b>
<b class="mp" style="left:877px;top:155px;width:1px"></b>
<b class="mkq" style="left:859px;top:157px;width:1px"></b>
<b class="mk" style="left:860px;top:157px;width:5px"></b>
<b class="mkq" style="left:865px;top:157px;width:1px"></b>
<b class="mp" style="left:866px;top:157px;width:1px"></b>
<b class="msq" style="left:868px;top:157px;width:1px"></b>
<b class="ms" style="left:869px;top:157px;width:42px"></b>
<b class="msq" style="left:911px;top:157px;width:1px"></b>
<b class="mp" style="left:911px;top:157px;width:1px"></b>
<b class="mkq" style="left:859px;top:159px;width:1px"></b>
<b class="mk" style="left:860px;top:159px;width:6px"></b>
<b class="mkq" style="left:866px;top:159px;width:1px"></b>
<b class="mp" style="left:867px;top:159px;width:1px"></b>
<b class="mb" style="left:869px;top:159px;width:1px"></b>
<b class="mb" style="left:862px;top:161px;width:1px"></b>
<b class="mkq" style="left:865px;top:163px;width:1px"></b>
<b class="mk" style="left:866px;top:163px;width:10px"></b>
<b class="mkq" style="left:876px;top:163px;width:1px"></b>
<b class="mp" style="left:877px;top:163px;width:1px"></b>
<b class="msq" style="left:879px;top:163px;width:1px"></b>
<b class="ms" style="left:879px;top:163px;width:5px"></b>
<b class="msq" style="left:884px;top:163px;width:1px"></b>
<b class="mp" style="left:885px;top:163px;width:1px"></b>
<b class="mkq" style="left:865px;top:165px;width:1px"></b>
<b class="mk" style="left:866px;top:165px;width:4px"></b>
<b class="mkq" style="left:870px;top:165px;width:1px"></b>
<b class="mp" style="left:870px;top:165px;width:1px"></b>
<b class="mt" style="left:872px;top:165px;width:3px"></b>
<b class="mb" style="left:862px;top:167px;width:1px"></b>
<b class="mb" style="left:859px;top:169px;width:1px"></b>
<b class="mb" style="left:856px;top:171px;width:1px"></b>
<b class="mp" style="left:856px;top:171px;width:1px"></b>
<b class="mb" style="left:856px;top:173px;width:1px"></b>
<b class="mkq" style="left:859px;top:175px;width:1px"></b>
<b class="mk" style="left:860px;top:175px;width:3px"></b>
<b class="mkq" style="left:863px;top:175px;width:1px"></b>
<b class="mp" style="left:864px;top:175px;width:1px"></b>
<b class="msq" style="left:865px;top:175px;width:1px"></b>
<b class="ms" style="left:866px;top:175px;width:5px"></b>
<b class="ms" style="left:872px;top:175px;width:4px"></b>
<b class="msq" style="left:876px;top:175px;width:1px"></b>
<b class="mp" style="left:877px;top:175px;width:1px"></b>
<b class="mkq" style="left:859px;top:177px;width:1px"></b>
<b class="mk" style="left:860px;top:177px;width:5px"></b>
<b class="mkq" style="left:865px;top:177px;width:1px"></b>
<b class="mp" style="left:866px;top:177px;width:1px"></b>
<b class="msq" style="left:868px;top:177px;width:1px"></b>
<b class="ms" style="left:869px;top:177px;width:39px"></b>
<b class="msq" style="left:908px;top:177px;width:1px"></b>
<b class="mp" style="left:909px;top:177px;width:1px"></b>
<b class="mkq" style="left:859px;top:179px;width:1px"></b>
<b class="mk" style="left:860px;top:179px;width:5px"></b>
<b class="mkq" style="left:865px;top:179px;width:1px"></b>
<b class="mp" style="left:865px;top:179px;width:1px"></b>
<b class="mb" style="left:867px;top:179px;width:1px"></b>
<b class="msq" style="left:868px;top:179px;width:1px"></b>
<b class="ms" style="left:869px;top:179px;width:4px"></b>
<b class="ms" style="left:874px;top:179px;width:5px"></b>
<b class="ms" style="left:879px;top:179px;width:2px"></b>
<b class="msq" style="left:881px;top:179px;width:1px"></b>
<b class="mb" style="left:882px;top:179px;width:1px"></b>
<b class="mp" style="left:883px;top:179px;width:1px"></b>
<b class="mkq" style="left:859px;top:181px;width:1px"></b>
<b class="mk" style="left:860px;top:181px;width:6px"></b>
<b class="mkq" style="left:866px;top:181px;width:1px"></b>
<b class="mp" style="left:867px;top:181px;width:1px"></b>
<b class="mb" style="left:869px;top:181px;width:1px"></b>
<b class="mb" style="left:862px;top:183px;width:1px"></b>
<b class="mkq" style="left:865px;top:185px;width:1px"></b>
<b class="mk" style="left:866px;top:185px;width:10px"></b>
<b class="mkq" style="left:876px;top:185px;width:1px"></b>
<b class="mp" style="left:877px;top:185px;width:1px"></b>
<b class="msq" style="left:879px;top:185px;width:1px"></b>
<b class="ms" style="left:879px;top:185px;width:1px"></b>
<b class="msq" style="left:880px;top:185px;width:1px"></b>
<b class="mp" style="left:881px;top:185px;width:1px"></b>
<b class="mkq" style="left:865px;top:187px;width:1px"></b>
<b class="mk" style="left:866px;top:187px;width:4px"></b>
<b class="mkq" style="left:870px;top:187px;width:1px"></b>
<b class="mp" style="left:870px;top:187px;width:1px"></b>
<b class="mt" style="left:872px;top:187px;width:3px"></b>
<b class="mb" style="left:862px;top:189px;width:1px"></b>
<b class="mb" style="left:859px;top:191px;width:1px"></b>
<b class="mb" style="left:856px;top:193px;width:1px"></b>
<b class="mp" style="left:856px;top:193px;width:1px"></b>
<b class="mb" style="left:856px;top:195px;width:1px"></b>
<b class="mkq" style="left:859px;top:197px;width:1px"></b>
<b class="mk" style="left:860px;top:197px;width:3px"></b>
<b class="mkq" style="left:863px;top:197px;width:1px"></b>
<b class="mp" style="left:864px;top:197px;width:1px"></b>
<b class="msq" style="left:865px;top:197px;width:1px"></b>
<b class="ms" style="left:866px;top:197px;width:4px"></b>
<b class="ms" style="left:871px;top:197px;width:8px"></b>
<b class="ms" style="left:879px;top:197px;width:2px"></b>
<b class="msq" style="left:881px;top:197px;width:1px"></b>
<b class="mp" style="left:882px;top:197px;width:1px"></b>
<b class="mkq" style="left:859px;top:199px;width:1px"></b>
<b class="mk" style="left:860px;top:199px;width:5px"></b>
<b class="mkq" style="left:865px;top:199px;width:1px"></b>
<b class="mp" style="left:866px;top:199px;width:1px"></b>
<b class="msq" style="left:868px;top:199px;width:1px"></b>
<b class="ms" style="left:869px;top:199px;width:39px"></b>
<b class="msq" style="left:908px;top:199px;width:1px"></b>
<b class="mp" style="left:909px;top:199px;width:1px"></b>
<b class="mkq" style="left:859px;top:201px;width:1px"></b>
<b class="mk" style="left:860px;top:201px;width:6px"></b>
<b class="mkq" style="left:866px;top:201px;width:1px"></b>
<b class="mp" style="left:867px;top:201px;width:1px"></b>
<b class="mb" style="left:869px;top:201px;width:1px"></b>
<b class="mb" style="left:862px;top:203px;width:1px"></b>
<b class="mkq" style="left:865px;top:205px;width:1px"></b>
<b class="mk" style="left:866px;top:205px;width:10px"></b>
<b class="mkq" style="left:876px;top:205px;width:1px"></b>
<b class="mp" style="left:877px;top:205px;width:1px"></b>
<b class="msq" style="left:879px;top:205px;width:1px"></b>
<b class="ms" style="left:879px;top:205px;width:1px"></b>
<b class="msq" style="left:880px;top:205px;width:1px"></b>
<b class="mp" style="left:881px;top:205px;width:1px"></b>
<b class="mkq" style="left:865px;top:207px;width:1px"></b>
<b class="mk" style="left:866px;top:207px;width:4px"></b>
<b class="mkq" style="left:870px;top:207px;width:1px"></b>
<b class="mp" style="left:870px;top:207px;width:1px"></b>
<b class="mt" style="left:872px;top:207px;width:3px"></b>
<b class="mb" style="left:862px;top:209px;width:1px"></b>
<b class="mb" style="left:859px;top:211px;width:1px"></b>
<b class="mb" style="left:856px;top:213px;width:1px"></b>
<b class="mp" style="left:856px;top:213px;width:1px"></b>
<b class="mb" style="left:856px;top:215px;width:1px"></b>
<b class="mkq" style="left:859px;top:217px;width:1px"></b>
<b class="mk" style="left:860px;top:217px;width:3px"></b>
<b class="mkq" style="left:863px;top:217px;width:1px"></b>
<b class="mp" style="left:864px;top:217px;width:1px"></b>
<b class="msq" style="left:865px;top:217px;width:1px"></b>
<b class="ms" style="left:866px;top:217px;width:3px"></b>
<b class="ms" style="left:870px;top:217px;width:4px"></b>
<b class="ms" style="left:875px;top:217px;width:6px"></b>
<b class="msq" style="left:881px;top:217px;width:1px"></b>
<b class="mp" style="left:882px;top:217px;width:1px"></b>
<b class="mkq" style="left:859px;top:219px;width:1px"></b>
<b class="mk" style="left:860px;top:219px;width:5px"></b>
<b class="mkq" style="left:865px;top:219px;width:1px"></b>
<b class="mp" style="left:866px;top:219px;width:1px"></b>
<b class="msq" style="left:868px;top:219px;width:1px"></b>
<b class="ms" style="left:869px;top:219px;width:47px"></b>
<b class="msq" style="left:916px;top:219px;width:1px"></b>
<b class="mp" style="left:917px;top:219px;width:1px"></b>
<b class="mkq" style="left:859px;top:221px;width:1px"></b>
<b class="mk" style="left:860px;top:221px;width:5px"></b>
<b class="mkq" style="left:865px;top:221px;width:1px"></b>
<b class="mp" style="left:865px;top:221px;width:1px"></b>
<b class="mb" style="left:867px;top:221px;width:1px"></b>
<b class="msq" style="left:868px;top:221px;width:1px"></b>
<b class="ms" style="left:869px;top:221px;width:2px"></b>
<b class="ms" style="left:872px;top:221px;width:3px"></b>
<b class="msq" style="left:876px;top:221px;width:1px"></b>
<b class="mb" style="left:877px;top:221px;width:1px"></b>
<b class="mp" style="left:878px;top:221px;width:1px"></b>
<b class="mkq" style="left:859px;top:223px;width:1px"></b>
<b class="mk" style="left:860px;top:223px;width:6px"></b>
<b class="mkq" style="left:866px;top:223px;width:1px"></b>
<b class="mp" style="left:867px;top:223px;width:1px"></b>
<b class="mb" style="left:869px;top:223px;width:1px"></b>
<b class="mb" style="left:862px;top:225px;width:1px"></b>
<b class="mkq" style="left:865px;top:227px;width:1px"></b>
<b class="mk" style="left:866px;top:227px;width:10px"></b>
<b class="mkq" style="left:876px;top:227px;width:1px"></b>
<b class="mp" style="left:877px;top:227px;width:1px"></b>
<b class="msq" style="left:879px;top:227px;width:1px"></b>
<b class="ms" style="left:879px;top:227px;width:1px"></b>
<b class="msq" style="left:880px;top:227px;width:1px"></b>
<b class="mp" style="left:881px;top:227px;width:1px"></b>
<b class="mkq" style="left:865px;top:229px;width:1px"></b>
<b class="mk" style="left:866px;top:229px;width:4px"></b>
<b class="mkq" style="left:870px;top:229px;width:1px"></b>
<b class="mp" style="left:870px;top:229px;width:1px"></b>
<b class="mt" style="left:872px;top:229px;width:3px"></b>
<b class="mb" style="left:862px;top:231px;width:1px"></b>
<b class="mb" style="left:859px;top:233px;width:1px"></b>
<b class="mb" style="left:856px;top:235px;width:1px"></b>
<b class="mp" style="left:856px;top:235px;width:1px"></b>
<b class="mb" style="left:856px;top:237px;width:1px"></b>
<b class="mkq" style="left:859px;top:239px;width:1px"></b>
<b class="mk" style="left:860px;top:239px;width:3px"></b>
<b class="mkq" style="left:863px;top:239px;width:1px"></b>
<b class="mp" style="left:864px;top:239px;width:1px"></b>
<b class="msq" style="left:865px;top:239px;width:1px"></b>
<b class="ms" style="left:866px;top:239px;width:4px"></b>
<b class="ms" style="left:871px;top:239px;width:4px"></b>
<b class="msq" style="left:876px;top:239px;width:1px"></b>
<b class="mp" style="left:877px;top:239px;width:1px"></b>
<b class="mkq" style="left:859px;top:241px;width:1px"></b>
<b class="mk" style="left:860px;top:241px;width:5px"></b>
<b class="mkq" style="left:865px;top:241px;width:1px"></b>
<b class="mp" style="left:866px;top:241px;width:1px"></b>
<b class="msq" style="left:868px;top:241px;width:1px"></b>
<b class="ms" style="left:869px;top:241px;width:32px"></b>
<b class="msq" style="left:901px;top:241px;width:1px"></b>
<b class="mp" style="left:901px;top:241px;width:1px"></b>
<b class="mkq" style="left:859px;top:243px;width:1px"></b>
<b class="mk" style="left:860px;top:243px;width:5px"></b>
<b class="mkq" style="left:865px;top:243px;width:1px"></b>
<b class="mp" style="left:865px;top:243px;width:1px"></b>
<b class="mb" style="left:867px;top:243px;width:1px"></b>
<b class="msq" style="left:868px;top:243px;width:1px"></b>
<b class="ms" style="left:869px;top:243px;width:3px"></b>
<b class="ms" style="left:873px;top:243px;width:3px"></b>
<b class="msq" style="left:876px;top:243px;width:1px"></b>
<b class="mb" style="left:877px;top:243px;width:1px"></b>
<b class="mp" style="left:878px;top:243px;width:1px"></b>
<b class="mkq" style="left:859px;top:245px;width:1px"></b>
<b class="mk" style="left:860px;top:245px;width:6px"></b>
<b class="mkq" style="left:866px;top:245px;width:1px"></b>
<b class="mp" style="left:867px;top:245px;width:1px"></b>
<b class="mb" style="left:869px;top:245px;width:1px"></b>
<b class="mb" style="left:862px;top:247px;width:1px"></b>
<b class="mkq" style="left:865px;top:249px;width:1px"></b>
<b class="mk" style="left:866px;top:249px;width:10px"></b>
<b class="mkq" style="left:876px;top:249px;width:1px"></b>
<b class="mp" style="left:877px;top:249px;width:1px"></b>
<b class="msq" style="left:879px;top:249px;width:1px"></b>
<b class="ms" style="left:879px;top:249px;width:1px"></b>
<b class="msq" style="left:880px;top:249px;width:1px"></b>
<b class="mp" style="left:881px;top:249px;width:1px"></b>
<b class="mkq" style="left:865px;top:251px;width:1px"></b>
<b class="mk" style="left:866px;top:251px;width:5px"></b>
<b class="mkq" style="left:871px;top:251px;width:1px"></b>
<b class="mp" style="left:872px;top:251px;width:1px"></b>
<b class="msq" style="left:874px;top:251px;width:1px"></b>
<b class="ms" style="left:874px;top:251px;width:5px"></b>
<b class="msq" style="left:879px;top:251px;width:1px"></b>
<b class="mb" style="left:862px;top:253px;width:1px"></b>
<b class="mb" style="left:859px;top:255px;width:1px"></b>
<b class="mb" style="left:856px;top:257px;width:1px"></b>
<b class="mp" style="left:856px;top:257px;width:1px"></b>
<b class="mb" style="left:856px;top:259px;width:1px"></b>
<b class="mkq" style="left:859px;top:261px;width:1px"></b>
<b class="mk" style="left:860px;top:261px;width:3px"></b>
<b class="mkq" style="left:863px;top:261px;width:1px"></b>
<b class="mp" style="left:864px;top:261px;width:1px"></b>
<b class="msq" style="left:865px;top:261px;width:1px"></b>
<b class="ms" style="left:866px;top:261px;width:4px"></b>
<b class="ms" style="left:870px;top:261px;width:6px"></b>
<b class="ms" style="left:877px;top:261px;width:7px"></b>
<b class="ms" style="left:885px;top:261px;width:3px"></b>
<b class="msq" style="left:888px;top:261px;width:1px"></b>
<b class="mp" style="left:888px;top:261px;width:1px"></b>
<b class="mkq" style="left:859px;top:263px;width:1px"></b>
<b class="mk" style="left:860px;top:263px;width:5px"></b>
<b class="mkq" style="left:865px;top:263px;width:1px"></b>
<b class="mp" style="left:866px;top:263px;width:1px"></b>
<b class="msq" style="left:868px;top:263px;width:1px"></b>
<b class="ms" style="left:869px;top:263px;width:44px"></b>
<b class="msq" style="left:913px;top:263px;width:1px"></b>
<b class="mp" style="left:914px;top:263px;width:1px"></b>
<b class="mkq" style="left:859px;top:265px;width:1px"></b>
<b class="mk" style="left:860px;top:265px;width:5px"></b>
<b class="mkq" style="left:865px;top:265px;width:1px"></b>
<b class="mp" style="left:865px;top:265px;width:1px"></b>
<b class="mb" style="left:867px;top:265px;width:1px"></b>
<b class="msq" style="left:868px;top:265px;width:1px"></b>
<b class="ms" style="left:869px;top:265px;width:5px"></b>
<b class="ms" style="left:874px;top:265px;width:5px"></b>
<b class="ms" style="left:879px;top:265px;width:3px"></b>
<b class="ms" style="left:883px;top:265px;width:3px"></b>
<b class="ms" style="left:887px;top:265px;width:4px"></b>
<b class="ms" style="left:892px;top:265px;width:3px"></b>
<b class="msq" style="left:895px;top:265px;width:1px"></b>
<b class="mb" style="left:896px;top:265px;width:1px"></b>
<b class="mp" style="left:897px;top:265px;width:1px"></b>
<b class="mkq" style="left:859px;top:267px;width:1px"></b>
<b class="mk" style="left:860px;top:267px;width:6px"></b>
<b class="mkq" style="left:866px;top:267px;width:1px"></b>
<b class="mp" style="left:867px;top:267px;width:1px"></b>
<b class="mb" style="left:869px;top:267px;width:1px"></b>
<b class="mb" style="left:862px;top:269px;width:1px"></b>
<b class="mkq" style="left:865px;top:271px;width:1px"></b>
<b class="mk" style="left:866px;top:271px;width:10px"></b>
<b class="mkq" style="left:876px;top:271px;width:1px"></b>
<b class="mp" style="left:877px;top:271px;width:1px"></b>
<b class="msq" style="left:879px;top:271px;width:1px"></b>
<b class="ms" style="left:879px;top:271px;width:1px"></b>
<b class="msq" style="left:880px;top:271px;width:1px"></b>
<b class="mp" style="left:881px;top:271px;width:1px"></b>
<b class="mkq" style="left:865px;top:273px;width:1px"></b>
<b class="mk" style="left:866px;top:273px;width:4px"></b>
<b class="mkq" style="left:870px;top:273px;width:1px"></b>
<b class="mp" style="left:870px;top:273px;width:1px"></b>
<b class="mt" style="left:872px;top:273px;width:3px"></b>
<b class="mb" style="left:862px;top:275px;width:1px"></b>
<b class="mb" style="left:859px;top:277px;width:1px"></b>
<b class="mb" style="left:856px;top:279px;width:1px"></b>
<b class="mp" style="left:856px;top:279px;width:1px"></b>
<b class="mb" style="left:856px;top:281px;width:1px"></b>
<b class="mkq" style="left:859px;top:283px;width:1px"></b>
<b class="mk" style="left:860px;top:283px;width:3px"></b>
<b class="mkq" style="left:863px;top:283px;width:1px"></b>
<b class="mp" style="left:864px;top:283px;width:1px"></b>
<b class="msq" style="left:865px;top:283px;width:1px"></b>
<b class="ms" style="left:866px;top:283px;width:4px"></b>
<b class="ms" style="left:870px;top:283px;width:7px"></b>
<b class="ms" style="left:878px;top:283px;width:2px"></b>
<b class="ms" style="left:881px;top:283px;width:2px"></b>
<b class="msq" style="left:883px;top:283px;width:1px"></b>
<b class="mp" style="left:884px;top:283px;width:1px"></b>
<b class="mkq" style="left:859px;top:285px;width:1px"></b>
<b class="mk" style="left:860px;top:285px;width:5px"></b>
<b class="mkq" style="left:865px;top:285px;width:1px"></b>
<b class="mp" style="left:866px;top:285px;width:1px"></b>
<b class="msq" style="left:868px;top:285px;width:1px"></b>
<b class="ms" style="left:869px;top:285px;width:42px"></b>
<b class="msq" style="left:911px;top:285px;width:1px"></b>
<b class="mp" style="left:911px;top:285px;width:1px"></b>
<b class="mkq" style="left:859px;top:287px;width:1px"></b>
<b class="mk" style="left:860px;top:287px;width:5px"></b>
<b class="mkq" style="left:865px;top:287px;width:1px"></b>
<b class="mp" style="left:865px;top:287px;width:1px"></b>
<b class="mb" style="left:867px;top:287px;width:1px"></b>
<b class="msq" style="left:868px;top:287px;width:1px"></b>
<b class="ms" style="left:869px;top:287px;width:3px"></b>
<b class="ms" style="left:873px;top:287px;width:6px"></b>
<b class="ms" style="left:879px;top:287px;width:5px"></b>
<b class="ms" style="left:885px;top:287px;width:6px"></b>
<b class="ms" style="left:892px;top:287px;width:3px"></b>
<b class="ms" style="left:896px;top:287px;width:1px"></b>
<b class="msq" style="left:897px;top:287px;width:1px"></b>
<b class="mb" style="left:897px;top:287px;width:1px"></b>
<b class="mp" style="left:898px;top:287px;width:1px"></b>
<b class="mkq" style="left:859px;top:289px;width:1px"></b>
<b class="mk" style="left:860px;top:289px;width:6px"></b>
<b class="mkq" style="left:866px;top:289px;width:1px"></b>
<b class="mp" style="left:867px;top:289px;width:1px"></b>
<b class="mb" style="left:869px;top:289px;width:1px"></b>
<b class="mb" style="left:862px;top:291px;width:1px"></b>
<b class="mkq" style="left:865px;top:293px;width:1px"></b>
<b class="mk" style="left:866px;top:293px;width:10px"></b>
<b class="mkq" style="left:876px;top:293px;width:1px"></b>
<b class="mp" style="left:877px;top:293px;width:1px"></b>
<b class="msq" style="left:879px;top:293px;width:1px"></b>
<b class="ms" style="left:879px;top:293px;width:5px"></b>
<b class="msq" style="left:884px;top:293px;width:1px"></b>
<b class="mp" style="left:885px;top:293px;width:1px"></b>
<b class="mkq" style="left:865px;top:295px;width:1px"></b>
<b class="mk" style="left:866px;top:295px;width:4px"></b>
<b class="mkq" style="left:870px;top:295px;width:1px"></b>
<b class="mp" style="left:870px;top:295px;width:1px"></b>
<b class="mt" style="left:872px;top:295px;width:3px"></b>
<b class="mb" style="left:862px;top:297px;width:1px"></b>
<b class="mb" style="left:859px;top:299px;width:1px"></b>
<b class="mb" style="left:856px;top:301px;width:1px"></b>
<b class="mp" style="left:856px;top:301px;width:1px"></b>
<b class="mb" style="left:856px;top:303px;width:1px"></b>
<b class="mkq" style="left:859px;top:305px;width:1px"></b>
<b class="mk" style="left:860px;top:305px;width:3px"></b>
<b class="mkq" style="left:863px;top:305px;width:1px"></b>
<b class="mp" style="left:864px;top:305px;width:1px"></b>
<b class="msq" style="left:865px;top:305px;width:1px"></b>
<b class="ms" style="left:866px;top:305px;width:5px"></b>
<b class="ms" style="left:872px;top:305px;width:2px"></b>
<b class="msq" style="left:874px;top:305px;width:1px"></b>
<b class="mp" style="left:875px;top:305px;width:1px"></b>
<b class="mkq" style="left:859px;top:307px;width:1px"></b>
<b class="mk" style="left:860px;top:307px;width:5px"></b>
<b class="mkq" style="left:865px;top:307px;width:1px"></b>
<b class="mp" style="left:866px;top:307px;width:1px"></b>
<b class="msq" style="left:868px;top:307px;width:1px"></b>
<b class="ms" style="left:869px;top:307px;width:35px"></b>
<b class="msq" style="left:904px;top:307px;width:1px"></b>
<b class="mp" style="left:905px;top:307px;width:1px"></b>
<b class="mkq" style="left:859px;top:309px;width:1px"></b>
<b class="mk" style="left:860px;top:309px;width:6px"></b>
<b class="mkq" style="left:866px;top:309px;width:1px"></b>
<b class="mp" style="left:867px;top:309px;width:1px"></b>
<b class="mb" style="left:869px;top:309px;width:1px"></b>
<b class="mb" style="left:862px;top:311px;width:1px"></b>
<b class="mkq" style="left:865px;top:313px;width:1px"></b>
<b class="mk" style="left:866px;top:313px;width:10px"></b>
<b class="mkq" style="left:876px;top:313px;width:1px"></b>
<b class="mp" style="left:877px;top:313px;width:1px"></b>
<b class="msq" style="left:879px;top:313px;width:1px"></b>
<b class="ms" style="left:879px;top:313px;width:1px"></b>
<b class="msq" style="left:880px;top:313px;width:1px"></b>
<b class="mp" style="left:881px;top:313px;width:1px"></b>
<b class="mkq" style="left:865px;top:315px;width:1px"></b>
<b class="mk" style="left:866px;top:315px;width:4px"></b>
<b class="mkq" style="left:870px;top:315px;width:1px"></b>
<b class="mp" style="left:870px;top:315px;width:1px"></b>
<b class="mt" style="left:872px;top:315px;width:3px"></b>
<b class="mb" style="left:862px;top:317px;width:1px"></b>
<b class="mb" style="left:859px;top:319px;width:1px"></b>
<b class="mb" style="left:856px;top:321px;width:1px"></b>
<b class="mp" style="left:856px;top:321px;width:1px"></b>
<b class="mb" style="left:856px;top:323px;width:1px"></b>
<b class="mkq" style="left:859px;top:325px;width:1px"></b>
<b class="mk" style="left:860px;top:325px;width:3px"></b>
<b class="mkq" style="left:863px;top:325px;width:1px"></b>
<b class="mp" style="left:864px;top:325px;width:1px"></b>
<b class="msq" style="left:865px;top:325px;width:1px"></b>
<b class="ms" style="left:866px;top:325px;width:6px"></b>
<b class="ms" style="left:873px;top:325px;width:2px"></b>
<b class="msq" style="left:875px;top:325px;width:1px"></b>
<b class="mp" style="left:876px;top:325px;width:1px"></b>
<b class="mkq" style="left:859px;top:327px;width:1px"></b>
<b class="mk" style="left:860px;top:327px;width:5px"></b>
<b class="mkq" style="left:865px;top:327px;width:1px"></b>
<b class="mp" style="left:866px;top:327px;width:1px"></b>
<b class="msq" style="left:868px;top:327px;width:1px"></b>
<b class="ms" style="left:869px;top:327px;width:29px"></b>
<b class="msq" style="left:898px;top:327px;width:1px"></b>
<b class="mp" style="left:899px;top:327px;width:1px"></b>
<b class="mkq" style="left:859px;top:329px;width:1px"></b>
<b class="mk" style="left:860px;top:329px;width:6px"></b>
<b class="mkq" style="left:866px;top:329px;width:1px"></b>
<b class="mp" style="left:867px;top:329px;width:1px"></b>
<b class="mb" style="left:869px;top:329px;width:1px"></b>
<b class="mb" style="left:862px;top:331px;width:1px"></b>
<b class="mkq" style="left:865px;top:333px;width:1px"></b>
<b class="mk" style="left:866px;top:333px;width:10px"></b>
<b class="mkq" style="left:876px;top:333px;width:1px"></b>
<b class="mp" style="left:877px;top:333px;width:1px"></b>
<b class="msq" style="left:879px;top:333px;width:1px"></b>
<b class="ms" style="left:879px;top:333px;width:1px"></b>
<b class="msq" style="left:880px;top:333px;width:1px"></b>
<b class="mp" style="left:881px;top:333px;width:1px"></b>
<b class="mkq" style="left:865px;top:335px;width:1px"></b>
<b class="mk" style="left:866px;top:335px;width:4px"></b>
<b class="mkq" style="left:870px;top:335px;width:1px"></b>
<b class="mp" style="left:870px;top:335px;width:1px"></b>
<b class="mt" style="left:872px;top:335px;width:3px"></b>
<b class="mb" style="left:862px;top:337px;width:1px"></b>
<b class="mb" style="left:859px;top:339px;width:1px"></b>
<b class="mb" style="left:856px;top:341px;width:1px"></b>
<b class="mp" style="left:856px;top:341px;width:1px"></b>
<b class="mb" style="left:856px;top:343px;width:1px"></b>
<b class="mkq" style="left:859px;top:345px;width:1px"></b>
<b class="mk" style="left:860px;top:345px;width:3px"></b>
<b class="mkq" style="left:863px;top:345px;width:1px"></b>
<b class="mp" style="left:864px;top:345px;width:1px"></b>
<b class="msq" style="left:865px;top:345px;width:1px"></b>
<b class="ms" style="left:866px;top:345px;width:6px"></b>
<b class="ms" style="left:873px;top:345px;width:6px"></b>
<b class="msq" style="left:879px;top:345px;width:1px"></b>
<b class="mp" style="left:879px;top:345px;width:1px"></b>
<b class="mkq" style="left:859px;top:347px;width:1px"></b>
<b class="mk" style="left:860px;top:347px;width:5px"></b>
<b class="mkq" style="left:865px;top:347px;width:1px"></b>
<b class="mp" style="left:866px;top:347px;width:1px"></b>
<b class="msq" style="left:868px;top:347px;width:1px"></b>
<b class="ms" style="left:869px;top:347px;width:41px"></b>
<b class="msq" style="left:910px;top:347px;width:1px"></b>
<b class="mp" style="left:911px;top:347px;width:1px"></b>
<b class="mkq" style="left:859px;top:349px;width:1px"></b>
<b class="mk" style="left:860px;top:349px;width:6px"></b>
<b class="mkq" style="left:866px;top:349px;width:1px"></b>
<b class="mp" style="left:867px;top:349px;width:1px"></b>
<b class="mb" style="left:869px;top:349px;width:1px"></b>
<b class="mb" style="left:862px;top:351px;width:1px"></b>
<b class="mkq" style="left:865px;top:353px;width:1px"></b>
<b class="mk" style="left:866px;top:353px;width:10px"></b>
<b class="mkq" style="left:876px;top:353px;width:1px"></b>
<b class="mp" style="left:877px;top:353px;width:1px"></b>
<b class="msq" style="left:879px;top:353px;width:1px"></b>
<b class="ms" style="left:879px;top:353px;width:5px"></b>
<b class="msq" style="left:884px;top:353px;width:1px"></b>
<b class="mp" style="left:885px;top:353px;width:1px"></b>
<b class="mkq" style="left:865px;top:355px;width:1px"></b>
<b class="mk" style="left:866px;top:355px;width:4px"></b>
<b class="mkq" style="left:870px;top:355px;width:1px"></b>
<b class="mp" style="left:870px;top:355px;width:1px"></b>
<b class="msq" style="left:872px;top:355px;width:1px"></b>
<b class="ms" style="left:873px;top:355px;width:2px"></b>
<b class="msq" style="left:875px;top:355px;width:1px"></b>
<b class="mb" style="left:862px;top:357px;width:1px"></b>
<b class="mp" style="left:863px;top:357px;width:1px"></b>
<b class="mb" style="left:862px;top:359px;width:1px"></b>
<b class="mkq" style="left:865px;top:361px;width:1px"></b>
<b class="mk" style="left:866px;top:361px;width:10px"></b>
<b class="mkq" style="left:876px;top:361px;width:1px"></b>
<b class="mp" style="left:877px;top:361px;width:1px"></b>
<b class="msq" style="left:879px;top:361px;width:1px"></b>
<b class="ms" style="left:879px;top:361px;width:5px"></b>
<b class="msq" style="left:884px;top:361px;width:1px"></b>
<b class="mp" style="left:885px;top:361px;width:1px"></b>
<b class="mkq" style="left:865px;top:363px;width:1px"></b>
<b class="mk" style="left:866px;top:363px;width:4px"></b>
<b class="mkq" style="left:870px;top:363px;width:1px"></b>
<b class="mp" style="left:870px;top:363px;width:1px"></b>
<b class="msq" style="left:872px;top:363px;width:1px"></b>
<b class="ms" style="left:873px;top:363px;width:2px"></b>
<b class="msq" style="left:875px;top:363px;width:1px"></b>
<b class="mb" style="left:862px;top:365px;width:1px"></b>
<b class="mb" style="left:859px;top:367px;width:1px"></b>
<b class="mb" style="left:856px;top:369px;width:1px"></b>
<b class="mp" style="left:856px;top:369px;width:1px"></b>
<b class="mb" style="left:856px;top:371px;width:1px"></b>
<b class="mkq" style="left:859px;top:373px;width:1px"></b>
<b class="mk" style="left:860px;top:373px;width:3px"></b>
<b class="mkq" style="left:863px;top:373px;width:1px"></b>
<b class="mp" style="left:864px;top:373px;width:1px"></b>
<b class="msq" style="left:865px;top:373px;width:1px"></b>
<b class="ms" style="left:866px;top:373px;width:8px"></b>
<b class="ms" style="left:874px;top:373px;width:4px"></b>
<b class="ms" style="left:879px;top:373px;width:4px"></b>
<b class="msq" style="left:883px;top:373px;width:1px"></b>
<b class="mp" style="left:884px;top:373px;width:1px"></b>
<b class="mkq" style="left:859px;top:375px;width:1px"></b>
<b class="mk" style="left:860px;top:375px;width:5px"></b>
<b class="mkq" style="left:865px;top:375px;width:1px"></b>
<b class="mp" style="left:866px;top:375px;width:1px"></b>
<b class="msq" style="left:868px;top:375px;width:1px"></b>
<b class="ms" style="left:869px;top:375px;width:43px"></b>
<b class="msq" style="left:912px;top:375px;width:1px"></b>
<b class="mp" style="left:913px;top:375px;width:1px"></b>
<b class="mkq" style="left:859px;top:377px;width:1px"></b>
<b class="mk" style="left:860px;top:377px;width:5px"></b>
<b class="mkq" style="left:865px;top:377px;width:1px"></b>
<b class="mp" style="left:865px;top:377px;width:1px"></b>
<b class="mb" style="left:867px;top:377px;width:1px"></b>
<b class="msq" style="left:868px;top:377px;width:1px"></b>
<b class="ms" style="left:869px;top:377px;width:5px"></b>
<b class="ms" style="left:875px;top:377px;width:4px"></b>
<b class="ms" style="left:880px;top:377px;width:1px"></b>
<b class="msq" style="left:881px;top:377px;width:1px"></b>
<b class="mb" style="left:882px;top:377px;width:1px"></b>
<b class="mp" style="left:883px;top:377px;width:1px"></b>
<b class="mkq" style="left:859px;top:379px;width:1px"></b>
<b class="mk" style="left:860px;top:379px;width:6px"></b>
<b class="mkq" style="left:866px;top:379px;width:1px"></b>
<b class="mp" style="left:867px;top:379px;width:1px"></b>
<b class="mb" style="left:869px;top:379px;width:1px"></b>
<b class="mb" style="left:862px;top:381px;width:1px"></b>
<b class="mkq" style="left:865px;top:383px;width:1px"></b>
<b class="mk" style="left:866px;top:383px;width:10px"></b>
<b class="mkq" style="left:876px;top:383px;width:1px"></b>
<b class="mp" style="left:877px;top:383px;width:1px"></b>
<b class="msq" style="left:879px;top:383px;width:1px"></b>
<b class="ms" style="left:879px;top:383px;width:1px"></b>
<b class="msq" style="left:880px;top:383px;width:1px"></b>
<b class="mp" style="left:881px;top:383px;width:1px"></b>
<b class="mkq" style="left:865px;top:385px;width:1px"></b>
<b class="mk" style="left:866px;top:385px;width:4px"></b>
<b class="mkq" style="left:870px;top:385px;width:1px"></b>
<b class="mp" style="left:870px;top:385px;width:1px"></b>
<b class="mt" style="left:872px;top:385px;width:3px"></b>
<b class="mb" style="left:862px;top:387px;width:1px"></b>
<b class="mb" style="left:859px;top:389px;width:1px"></b>
<b class="mb" style="left:856px;top:391px;width:1px"></b>
<b class="mp" style="left:856px;top:391px;width:1px"></b>
<b class="mb" style="left:856px;top:393px;width:1px"></b>
<b class="mkq" style="left:859px;top:395px;width:1px"></b>
<b class="mk" style="left:860px;top:395px;width:5px"></b>
<b class="mkq" style="left:865px;top:395px;width:1px"></b>
<b class="mp" style="left:866px;top:395px;width:1px"></b>
<b class="msq" style="left:868px;top:395px;width:1px"></b>
<b class="ms" style="left:869px;top:395px;width:46px"></b>
<b class="msq" style="left:915px;top:395px;width:1px"></b>
<b class="mp" style="left:915px;top:395px;width:1px"></b>
<b class="mkq" style="left:859px;top:397px;width:1px"></b>
<b class="mk" style="left:860px;top:397px;width:6px"></b>
<b class="mkq" style="left:866px;top:397px;width:1px"></b>
<b class="mp" style="left:867px;top:397px;width:1px"></b>
<b class="mb" style="left:869px;top:397px;width:1px"></b>
<b class="mb" style="left:862px;top:399px;width:1px"></b>
<b class="mkq" style="left:865px;top:401px;width:1px"></b>
<b class="mk" style="left:866px;top:401px;width:10px"></b>
<b class="mkq" style="left:876px;top:401px;width:1px"></b>
<b class="mp" style="left:877px;top:401px;width:1px"></b>
<b class="msq" style="left:879px;top:401px;width:1px"></b>
<b class="ms" style="left:879px;top:401px;width:5px"></b>
<b class="msq" style="left:884px;top:401px;width:1px"></b>
<b class="mp" style="left:885px;top:401px;width:1px"></b>
<b class="mkq" style="left:865px;top:403px;width:1px"></b>
<b class="mk" style="left:866px;top:403px;width:5px"></b>
<b class="mkq" style="left:871px;top:403px;width:1px"></b>
<b class="mp" style="left:872px;top:403px;width:1px"></b>
<b class="msq" style="left:874px;top:403px;width:1px"></b>
<b class="ms" style="left:874px;top:403px;width:5px"></b>
<b class="msq" style="left:879px;top:403px;width:1px"></b>
<b class="mb" style="left:862px;top:405px;width:1px"></b>
<b class="mb" style="left:859px;top:407px;width:1px"></b>
<b class="mb" style="left:856px;top:409px;width:1px"></b>
<b class="mp" style="left:856px;top:409px;width:1px"></b>
<b class="mb" style="left:856px;top:411px;width:1px"></b>
<b class="mkq" style="left:859px;top:413px;width:1px"></b>
<b class="mk" style="left:860px;top:413px;width:5px"></b>
<b class="mkq" style="left:865px;top:413px;width:1px"></b>
<b class="mp" style="left:866px;top:413px;width:1px"></b>
<b class="msq" style="left:868px;top:413px;width:1px"></b>
<b class="ms" style="left:869px;top:413px;width:37px"></b>
<b class="msq" style="left:906px;top:413px;width:1px"></b>
<b class="mp" style="left:907px;top:413px;width:1px"></b>
<b class="mkq" style="left:859px;top:415px;width:1px"></b>
<b class="mk" style="left:860px;top:415px;width:6px"></b>
<b class="mkq" style="left:866px;top:415px;width:1px"></b>
<b class="mp" style="left:867px;top:415px;width:1px"></b>
<b class="mb" style="left:869px;top:415px;width:1px"></b>
<b class="mb" style="left:862px;top:417px;width:1px"></b>
<b class="mkq" style="left:865px;top:419px;width:1px"></b>
<b class="mk" style="left:866px;top:419px;width:10px"></b>
<b class="mkq" style="left:876px;top:419px;width:1px"></b>
<b class="mp" style="left:877px;top:419px;width:1px"></b>
<b class="msq" style="left:879px;top:419px;width:1px"></b>
<b class="ms" style="left:879px;top:419px;width:5px"></b>
<b class="msq" style="left:884px;top:419px;width:1px"></b>
<b class="mp" style="left:885px;top:419px;width:1px"></b>
<b class="mkq" style="left:865px;top:421px;width:1px"></b>
<b class="mk" style="left:866px;top:421px;width:5px"></b>
<b class="mkq" style="left:871px;top:421px;width:1px"></b>
<b class="mp" style="left:872px;top:421px;width:1px"></b>
<b class="msq" style="left:874px;top:421px;width:1px"></b>
<b class="ms" style="left:874px;top:421px;width:5px"></b>
<b class="msq" style="left:879px;top:421px;width:1px"></b>
<b class="mb" style="left:862px;top:423px;width:1px"></b>
<b class="mb" style="left:859px;top:425px;width:1px"></b>
<b class="mb" style="left:856px;top:427px;width:1px"></b>
<b class="mp" style="left:856px;top:427px;width:1px"></b>
<b class="mb" style="left:856px;top:429px;width:1px"></b>
<b class="mkq" style="left:859px;top:431px;width:1px"></b>
<b class="mk" style="left:860px;top:431px;width:3px"></b>
<b class="mkq" style="left:863px;top:431px;width:1px"></b>
<b class="mp" style="left:864px;top:431px;width:1px"></b>
<b class="msq" style="left:865px;top:431px;width:1px"></b>
<b class="ms" style="left:866px;top:431px;width:8px"></b>
<b class="ms" style="left:874px;top:431px;width:3px"></b>
<b class="ms" style="left:878px;top:431px;width:2px"></b>
<b class="ms" style="left:881px;top:431px;width:1px"></b>
<b class="msq" style="left:882px;top:431px;width:1px"></b>
<b class="mp" style="left:883px;top:431px;width:1px"></b>
<b class="mkq" style="left:859px;top:433px;width:1px"></b>
<b class="mk" style="left:860px;top:433px;width:5px"></b>
<b class="mkq" style="left:865px;top:433px;width:1px"></b>
<b class="mp" style="left:866px;top:433px;width:1px"></b>
<b class="msq" style="left:868px;top:433px;width:1px"></b>
<b class="ms" style="left:869px;top:433px;width:41px"></b>
<b class="msq" style="left:910px;top:433px;width:1px"></b>
<b class="mp" style="left:911px;top:433px;width:1px"></b>
<b class="mkq" style="left:859px;top:435px;width:1px"></b>
<b class="mk" style="left:860px;top:435px;width:6px"></b>
<b class="mkq" style="left:866px;top:435px;width:1px"></b>
<b class="mp" style="left:867px;top:435px;width:1px"></b>
<b class="mb" style="left:869px;top:435px;width:1px"></b>
<b class="mb" style="left:862px;top:437px;width:1px"></b>
<b class="mkq" style="left:865px;top:439px;width:1px"></b>
<b class="mk" style="left:866px;top:439px;width:10px"></b>
<b class="mkq" style="left:876px;top:439px;width:1px"></b>
<b class="mp" style="left:877px;top:439px;width:1px"></b>
<b class="msq" style="left:879px;top:439px;width:1px"></b>
<b class="ms" style="left:879px;top:439px;width:1px"></b>
<b class="msq" style="left:880px;top:439px;width:1px"></b>
<b class="mp" style="left:881px;top:439px;width:1px"></b>
<b class="mkq" style="left:865px;top:441px;width:1px"></b>
<b class="mk" style="left:866px;top:441px;width:5px"></b>
<b class="mkq" style="left:871px;top:441px;width:1px"></b>
<b class="mp" style="left:872px;top:441px;width:1px"></b>
<b class="msq" style="left:874px;top:441px;width:1px"></b>
<b class="ms" style="left:874px;top:441px;width:5px"></b>
<b class="msq" style="left:879px;top:441px;width:1px"></b>
<b class="mb" style="left:862px;top:443px;width:1px"></b>
<b class="mb" style="left:859px;top:445px;width:1px"></b>
<b class="mb" style="left:856px;top:447px;width:1px"></b>
<b class="mp" style="left:856px;top:447px;width:1px"></b>
<b class="mb" style="left:856px;top:449px;width:1px"></b>
<b class="mkq" style="left:859px;top:451px;width:1px"></b>
<b class="mk" style="left:860px;top:451px;width:3px"></b>
<b class="mkq" style="left:863px;top:451px;width:1px"></b>
<b class="mp" style="left:864px;top:451px;width:1px"></b>
<b class="msq" style="left:865px;top:451px;width:1px"></b>
<b class="ms" style="left:866px;top:451px;width:4px"></b>
<b class="ms" style="left:870px;top:451px;width:3px"></b>
<b class="msq" style="left:873px;top:451px;width:1px"></b>
<b class="mp" style="left:874px;top:451px;width:1px"></b>
<b class="mkq" style="left:859px;top:453px;width:1px"></b>
<b class="mk" style="left:860px;top:453px;width:5px"></b>
<b class="mkq" style="left:865px;top:453px;width:1px"></b>
<b class="mp" style="left:866px;top:453px;width:1px"></b>
<b class="msq" style="left:868px;top:453px;width:1px"></b>
<b class="ms" style="left:869px;top:453px;width:41px"></b>
<b class="msq" style="left:910px;top:453px;width:1px"></b>
<b class="mp" style="left:911px;top:453px;width:1px"></b>
<b class="mkq" style="left:859px;top:455px;width:1px"></b>
<b class="mk" style="left:860px;top:455px;width:6px"></b>
<b class="mkq" style="left:866px;top:455px;width:1px"></b>
<b class="mp" style="left:867px;top:455px;width:1px"></b>
<b class="mb" style="left:869px;top:455px;width:1px"></b>
<b class="mb" style="left:862px;top:457px;width:1px"></b>
<b class="mkq" style="left:865px;top:459px;width:1px"></b>
<b class="mk" style="left:866px;top:459px;width:10px"></b>
<b class="mkq" style="left:876px;top:459px;width:1px"></b>
<b class="mp" style="left:877px;top:459px;width:1px"></b>
<b class="msq" style="left:879px;top:459px;width:1px"></b>
<b class="ms" style="left:879px;top:459px;width:5px"></b>
<b class="msq" style="left:884px;top:459px;width:1px"></b>
<b class="mp" style="left:885px;top:459px;width:1px"></b>
<b class="mkq" style="left:865px;top:461px;width:1px"></b>
<b class="mk" style="left:866px;top:461px;width:4px"></b>
<b class="mkq" style="left:870px;top:461px;width:1px"></b>
<b class="mp" style="left:870px;top:461px;width:1px"></b>
<b class="msq" style="left:872px;top:461px;width:1px"></b>
<b class="ms" style="left:873px;top:461px;width:7px"></b>
<b class="ms" style="left:881px;top:461px;width:2px"></b>
<b class="msq" style="left:883px;top:461px;width:1px"></b>
<b class="mb" style="left:862px;top:463px;width:1px"></b>
<b class="mp" style="left:863px;top:463px;width:1px"></b>
<b class="mb" style="left:862px;top:465px;width:1px"></b>
<b class="mkq" style="left:865px;top:467px;width:1px"></b>
<b class="mk" style="left:866px;top:467px;width:10px"></b>
<b class="mkq" style="left:876px;top:467px;width:1px"></b>
<b class="mp" style="left:877px;top:467px;width:1px"></b>
<b class="msq" style="left:879px;top:467px;width:1px"></b>
<b class="ms" style="left:879px;top:467px;width:5px"></b>
<b class="msq" style="left:884px;top:467px;width:1px"></b>
<b class="mp" style="left:885px;top:467px;width:1px"></b>
<b class="mkq" style="left:865px;top:469px;width:1px"></b>
<b class="mk" style="left:866px;top:469px;width:5px"></b>
<b class="mkq" style="left:871px;top:469px;width:1px"></b>
<b class="mp" style="left:872px;top:469px;width:1px"></b>
<b class="msq" style="left:874px;top:469px;width:1px"></b>
<b class="ms" style="left:874px;top:469px;width:5px"></b>
<b class="msq" style="left:879px;top:469px;width:1px"></b>
<b class="mb" style="left:862px;top:471px;width:1px"></b>
<b class="mb" style="left:859px;top:473px;width:1px"></b>
<b class="mb" style="left:856px;top:475px;width:1px"></b>
<b class="mp" style="left:856px;top:475px;width:1px"></b>
<b class="mb" style="left:856px;top:477px;width:1px"></b>
<b class="mkq" style="left:859px;top:479px;width:1px"></b>
<b class="mk" style="left:860px;top:479px;width:3px"></b>
<b class="mkq" style="left:863px;top:479px;width:1px"></b>
<b class="mp" style="left:864px;top:479px;width:1px"></b>
<b class="msq" style="left:865px;top:479px;width:1px"></b>
<b class="ms" style="left:866px;top:479px;width:3px"></b>
<b class="ms" style="left:870px;top:479px;width:3px"></b>
<b class="msq" style="left:873px;top:479px;width:1px"></b>
<b class="mp" style="left:874px;top:479px;width:1px"></b>
<b class="mkq" style="left:859px;top:481px;width:1px"></b>
<b class="mk" style="left:860px;top:481px;width:5px"></b>
<b class="mkq" style="left:865px;top:481px;width:1px"></b>
<b class="mp" style="left:866px;top:481px;width:1px"></b>
<b class="msq" style="left:868px;top:481px;width:1px"></b>
<b class="ms" style="left:869px;top:481px;width:42px"></b>
<b class="msq" style="left:911px;top:481px;width:1px"></b>
<b class="mp" style="left:912px;top:481px;width:1px"></b>
<b class="mkq" style="left:859px;top:483px;width:1px"></b>
<b class="mk" style="left:860px;top:483px;width:6px"></b>
<b class="mkq" style="left:866px;top:483px;width:1px"></b>
<b class="mp" style="left:867px;top:483px;width:1px"></b>
<b class="mb" style="left:869px;top:483px;width:1px"></b>
<b class="mb" style="left:862px;top:485px;width:1px"></b>
<b class="mkq" style="left:865px;top:487px;width:1px"></b>
<b class="mk" style="left:866px;top:487px;width:10px"></b>
<b class="mkq" style="left:876px;top:487px;width:1px"></b>
<b class="mp" style="left:877px;top:487px;width:1px"></b>
<b class="msq" style="left:879px;top:487px;width:1px"></b>
<b class="ms" style="left:879px;top:487px;width:5px"></b>
<b class="msq" style="left:884px;top:487px;width:1px"></b>
<b class="mp" style="left:885px;top:487px;width:1px"></b>
<b class="mkq" style="left:865px;top:489px;width:1px"></b>
<b class="mk" style="left:866px;top:489px;width:5px"></b>
<b class="mkq" style="left:871px;top:489px;width:1px"></b>
<b class="mp" style="left:872px;top:489px;width:1px"></b>
<b class="msq" style="left:874px;top:489px;width:1px"></b>
<b class="ms" style="left:874px;top:489px;width:5px"></b>
<b class="msq" style="left:879px;top:489px;width:1px"></b>
<b class="mb" style="left:862px;top:491px;width:1px"></b>
<b class="mb" style="left:859px;top:493px;width:1px"></b>
<b class="mb" style="left:856px;top:495px;width:1px"></b>
<b class="mp" style="left:856px;top:495px;width:1px"></b>
<b class="mb" style="left:856px;top:497px;width:1px"></b>
<b class="mkq" style="left:859px;top:499px;width:1px"></b>
<b class="mk" style="left:860px;top:499px;width:3px"></b>
<b class="mkq" style="left:863px;top:499px;width:1px"></b>
<b class="mp" style="left:864px;top:499px;width:1px"></b>
<b class="msq" style="left:865px;top:499px;width:1px"></b>
<b class="ms" style="left:866px;top:499px;width:3px"></b>
<b class="ms" style="left:870px;top:499px;width:2px"></b>
<b class="msq" style="left:873px;top:499px;width:1px"></b>
<b class="mp" style="left:874px;top:499px;width:1px"></b>
<b class="mkq" style="left:859px;top:501px;width:1px"></b>
<b class="mk" style="left:860px;top:501px;width:5px"></b>
<b class="mkq" style="left:865px;top:501px;width:1px"></b>
<b class="mp" style="left:866px;top:501px;width:1px"></b>
<b class="msq" style="left:868px;top:501px;width:1px"></b>
<b class="ms" style="left:869px;top:501px;width:41px"></b>
<b class="msq" style="left:910px;top:501px;width:1px"></b>
<b class="mp" style="left:911px;top:501px;width:1px"></b>
<b class="mkq" style="left:859px;top:503px;width:1px"></b>
<b class="mk" style="left:860px;top:503px;width:6px"></b>
<b class="mkq" style="left:866px;top:503px;width:1px"></b>
<b class="mp" style="left:867px;top:503px;width:1px"></b>
<b class="mb" style="left:869px;top:503px;width:1px"></b>
<b class="mb" style="left:862px;top:505px;width:1px"></b>
<b class="mkq" style="left:865px;top:507px;width:1px"></b>
<b class="mk" style="left:866px;top:507px;width:10px"></b>
<b class="mkq" style="left:876px;top:507px;width:1px"></b>
<b class="mp" style="left:877px;top:507px;width:1px"></b>
<b class="msq" style="left:879px;top:507px;width:1px"></b>
<b class="ms" style="left:879px;top:507px;width:5px"></b>
<b class="msq" style="left:884px;top:507px;width:1px"></b>
<b class="mp" style="left:885px;top:507px;width:1px"></b>
<b class="mkq" style="left:865px;top:509px;width:1px"></b>
<b class="mk" style="left:866px;top:509px;width:4px"></b>
<b class="mkq" style="left:870px;top:509px;width:1px"></b>
<b class="mp" style="left:870px;top:509px;width:1px"></b>
<b class="mt" style="left:872px;top:509px;width:3px"></b>
<b class="mb" style="left:862px;top:511px;width:1px"></b>
<b class="mb" style="left:859px;top:513px;width:1px"></b>
<b class="mb" style="left:856px;top:515px;width:1px"></b>
<b class="mp" style="left:856px;top:515px;width:1px"></b>
<b class="mb" style="left:856px;top:517px;width:1px"></b>
<b class="mkq" style="left:859px;top:519px;width:1px"></b>
<b class="mk" style="left:860px;top:519px;width:3px"></b>
<b class="mkq" style="left:863px;top:519px;width:1px"></b>
<b class="mp" style="left:864px;top:519px;width:1px"></b>
<b class="msq" style="left:865px;top:519px;width:1px"></b>
<b class="ms" style="left:866px;top:519px;width:5px"></b>
<b class="ms" style="left:872px;top:519px;width:1px"></b>
<b class="msq" style="left:873px;top:519px;width:1px"></b>
<b class="mp" style="left:874px;top:519px;width:1px"></b>
<b class="mkq" style="left:859px;top:521px;width:1px"></b>
<b class="mk" style="left:860px;top:521px;width:5px"></b>
<b class="mkq" style="left:865px;top:521px;width:1px"></b>
<b class="mp" style="left:866px;top:521px;width:1px"></b>
<b class="msq" style="left:868px;top:521px;width:1px"></b>
<b class="ms" style="left:869px;top:521px;width:41px"></b>
<b class="msq" style="left:910px;top:521px;width:1px"></b>
<b class="mp" style="left:911px;top:521px;width:1px"></b>
<b class="mkq" style="left:859px;top:523px;width:1px"></b>
<b class="mk" style="left:860px;top:523px;width:6px"></b>
<b class="mkq" style="left:866px;top:523px;width:1px"></b>
<b class="mp" style="left:867px;top:523px;width:1px"></b>
<b class="mb" style="left:869px;top:523px;width:1px"></b>
<b class="mb" style="left:862px;top:525px;width:1px"></b>
<b class="mkq" style="left:865px;top:527px;width:1px"></b>
<b class="mk" style="left:866px;top:527px;width:10px"></b>
<b class="mkq" style="left:876px;top:527px;width:1px"></b>
<b class="mp" style="left:877px;top:527px;width:1px"></b>
<b class="msq" style="left:879px;top:527px;width:1px"></b>
<b class="ms" style="left:879px;top:527px;width:5px"></b>
<b class="msq" style="left:884px;top:527px;width:1px"></b>
<b class="mp" style="left:885px;top:527px;width:1px"></b>
<b class="mkq" style="left:865px;top:529px;width:1px"></b>
<b class="mk" style="left:866px;top:529px;width:4px"></b>
<b class="mkq" style="left:870px;top:529px;width:1px"></b>
<b class="mp" style="left:870px;top:529px;width:1px"></b>
<b class="msq" style="left:872px;top:529px;width:1px"></b>
<b class="ms" style="left:873px;top:529px;width:2px"></b>
<b class="msq" style="left:875px;top:529px;width:1px"></b>
<b class="mb" style="left:862px;top:531px;width:1px"></b>
<b class="mp" style="left:863px;top:531px;width:1px"></b>
<b class="mb" style="left:862px;top:533px;width:1px"></b>
<b class="mkq" style="left:865px;top:535px;width:1px"></b>
<b class="mk" style="left:866px;top:535px;width:10px"></b>
<b class="mkq" style="left:876px;top:535px;width:1px"></b>
<b class="mp" style="left:877px;top:535px;width:1px"></b>
<b class="msq" style="left:879px;top:535px;width:1px"></b>
<b class="ms" style="left:879px;top:535px;width:5px"></b>
<b class="msq" style="left:884px;top:535px;width:1px"></b>
<b class="mp" style="left:885px;top:535px;width:1px"></b>
<b class="mkq" style="left:865px;top:537px;width:1px"></b>
<b class="mk" style="left:866px;top:537px;width:5px"></b>
<b class="mkq" style="left:871px;top:537px;width:1px"></b>
<b class="mp" style="left:872px;top:537px;width:1px"></b>
<b class="msq" style="left:874px;top:537px;width:1px"></b>
<b class="ms" style="left:874px;top:537px;width:5px"></b>
<b class="msq" style="left:879px;top:537px;width:1px"></b>
<b class="mb" style="left:862px;top:539px;width:1px"></b>
<b class="mb" style="left:859px;top:541px;width:1px"></b>
<b class="mb" style="left:856px;top:543px;width:1px"></b>
<b class="mp" style="left:856px;top:543px;width:1px"></b>
<b class="mb" style="left:856px;top:545px;width:1px"></b>
<b class="mkq" style="left:859px;top:547px;width:1px"></b>
<b class="mk" style="left:860px;top:547px;width:5px"></b>
<b class="mkq" style="left:865px;top:547px;width:1px"></b>
<b class="mp" style="left:866px;top:547px;width:1px"></b>
<b class="msq" style="left:868px;top:547px;width:1px"></b>
<b class="ms" style="left:869px;top:547px;width:28px"></b>
<b class="msq" style="left:897px;top:547px;width:1px"></b>
<b class="mp" style="left:898px;top:547px;width:1px"></b>
<b class="mkq" style="left:859px;top:549px;width:1px"></b>
<b class="mk" style="left:860px;top:549px;width:6px"></b>
<b class="mkq" style="left:866px;top:549px;width:1px"></b>
<b class="mp" style="left:867px;top:549px;width:1px"></b>
<b class="mb" style="left:869px;top:549px;width:1px"></b>
<b class="mb" style="left:862px;top:551px;width:1px"></b>
<b class="mkq" style="left:865px;top:553px;width:1px"></b>
<b class="mk" style="left:866px;top:553px;width:10px"></b>
<b class="mkq" style="left:876px;top:553px;width:1px"></b>
<b class="mp" style="left:877px;top:553px;width:1px"></b>
<b class="msq" style="left:879px;top:553px;width:1px"></b>
<b class="ms" style="left:879px;top:553px;width:1px"></b>
<b class="msq" style="left:880px;top:553px;width:1px"></b>
<b class="mp" style="left:881px;top:553px;width:1px"></b>
<b class="mkq" style="left:865px;top:555px;width:1px"></b>
<b class="mk" style="left:866px;top:555px;width:5px"></b>
<b class="mkq" style="left:871px;top:555px;width:1px"></b>
<b class="mp" style="left:872px;top:555px;width:1px"></b>
<b class="msq" style="left:874px;top:555px;width:1px"></b>
<b class="ms" style="left:874px;top:555px;width:5px"></b>
<b class="msq" style="left:879px;top:555px;width:1px"></b>
<b class="mb" style="left:862px;top:557px;width:1px"></b>
<b class="mb" style="left:859px;top:559px;width:1px"></b>
<b class="mb" style="left:856px;top:561px;width:1px"></b>
<b class="mp" style="left:856px;top:561px;width:1px"></b>
<b class="mb" style="left:856px;top:563px;width:1px"></b>
<b class="mkq" style="left:859px;top:565px;width:1px"></b>
<b class="mk" style="left:860px;top:565px;width:3px"></b>
<b class="mkq" style="left:863px;top:565px;width:1px"></b>
<b class="mp" style="left:864px;top:565px;width:1px"></b>
<b class="msq" style="left:865px;top:565px;width:1px"></b>
<b class="ms" style="left:866px;top:565px;width:7px"></b>
<b class="ms" style="left:874px;top:565px;width:7px"></b>
<b class="ms" style="left:882px;top:565px;width:6px"></b>
<b class="ms" style="left:888px;top:565px;width:2px"></b>
<b class="msq" style="left:890px;top:565px;width:1px"></b>
<b class="mp" style="left:891px;top:565px;width:1px"></b>
<b class="mkq" style="left:859px;top:567px;width:1px"></b>
<b class="mk" style="left:860px;top:567px;width:5px"></b>
<b class="mkq" style="left:865px;top:567px;width:1px"></b>
<b class="mp" style="left:866px;top:567px;width:1px"></b>
<b class="msq" style="left:868px;top:567px;width:1px"></b>
<b class="ms" style="left:869px;top:567px;width:44px"></b>
<b class="msq" style="left:913px;top:567px;width:1px"></b>
<b class="mp" style="left:914px;top:567px;width:1px"></b>
<b class="mkq" style="left:859px;top:569px;width:1px"></b>
<b class="mk" style="left:860px;top:569px;width:5px"></b>
<b class="mkq" style="left:865px;top:569px;width:1px"></b>
<b class="mp" style="left:865px;top:569px;width:1px"></b>
<b class="mb" style="left:867px;top:569px;width:1px"></b>
<b class="msq" style="left:868px;top:569px;width:1px"></b>
<b class="ms" style="left:869px;top:569px;width:4px"></b>
<b class="ms" style="left:874px;top:569px;width:2px"></b>
<b class="msq" style="left:876px;top:569px;width:1px"></b>
<b class="mb" style="left:877px;top:569px;width:1px"></b>
<b class="mp" style="left:878px;top:569px;width:1px"></b>
<b class="mkq" style="left:859px;top:571px;width:1px"></b>
<b class="mk" style="left:860px;top:571px;width:6px"></b>
<b class="mkq" style="left:866px;top:571px;width:1px"></b>
<b class="mp" style="left:867px;top:571px;width:1px"></b>
<b class="mb" style="left:869px;top:571px;width:1px"></b>
<b class="mb" style="left:862px;top:573px;width:1px"></b>
<b class="mkq" style="left:865px;top:575px;width:1px"></b>
<b class="mk" style="left:866px;top:575px;width:10px"></b>
<b class="mkq" style="left:876px;top:575px;width:1px"></b>
<b class="mp" style="left:877px;top:575px;width:1px"></b>
<b class="msq" style="left:879px;top:575px;width:1px"></b>
<b class="ms" style="left:879px;top:575px;width:1px"></b>
<b class="msq" style="left:880px;top:575px;width:1px"></b>
<b class="mp" style="left:881px;top:575px;width:1px"></b>
<b class="mkq" style="left:865px;top:577px;width:1px"></b>
<b class="mk" style="left:866px;top:577px;width:5px"></b>
<b class="mkq" style="left:871px;top:577px;width:1px"></b>
<b class="mp" style="left:872px;top:577px;width:1px"></b>
<b class="msq" style="left:874px;top:577px;width:1px"></b>
<b class="ms" style="left:874px;top:577px;width:5px"></b>
<b class="msq" style="left:879px;top:577px;width:1px"></b>
<b class="mb" style="left:862px;top:579px;width:1px"></b>
<b class="mb" style="left:859px;top:581px;width:1px"></b>
<b class="mb" style="left:856px;top:583px;width:1px"></b>
<b class="mp" style="left:856px;top:583px;width:1px"></b>
<b class="mb" style="left:856px;top:585px;width:1px"></b>
<b class="mkq" style="left:859px;top:587px;width:1px"></b>
<b class="mk" style="left:860px;top:587px;width:5px"></b>
<b class="mkq" style="left:865px;top:587px;width:1px"></b>
<b class="mp" style="left:866px;top:587px;width:1px"></b>
<b class="msq" style="left:868px;top:587px;width:1px"></b>
<b class="ms" style="left:869px;top:587px;width:35px"></b>
<b class="msq" style="left:904px;top:587px;width:1px"></b>
<b class="mp" style="left:905px;top:587px;width:1px"></b>
<b class="mkq" style="left:859px;top:589px;width:1px"></b>
<b class="mk" style="left:860px;top:589px;width:6px"></b>
<b class="mkq" style="left:866px;top:589px;width:1px"></b>
<b class="mp" style="left:867px;top:589px;width:1px"></b>
<b class="mb" style="left:869px;top:589px;width:1px"></b>
<b class="mb" style="left:862px;top:591px;width:1px"></b>
<b class="mkq" style="left:865px;top:593px;width:1px"></b>
<b class="mk" style="left:866px;top:593px;width:10px"></b>
<b class="mkq" style="left:876px;top:593px;width:1px"></b>
<b class="mp" style="left:877px;top:593px;width:1px"></b>
<b class="msq" style="left:879px;top:593px;width:1px"></b>
<b class="ms" style="left:879px;top:593px;width:1px"></b>
<b class="msq" style="left:880px;top:593px;width:1px"></b>
<b class="mp" style="left:881px;top:593px;width:1px"></b>
<b class="mkq" style="left:865px;top:595px;width:1px"></b>
<b class="mk" style="left:866px;top:595px;width:5px"></b>
<b class="mkq" style="left:871px;top:595px;width:1px"></b>
<b class="mp" style="left:872px;top:595px;width:1px"></b>
<b class="msq" style="left:874px;top:595px;width:1px"></b>
<b class="ms" style="left:874px;top:595px;width:5px"></b>
<b class="msq" style="left:879px;top:595px;width:1px"></b>
<b class="mb" style="left:862px;top:597px;width:1px"></b>
<b class="mb" style="left:859px;top:599px;width:1px"></b>
<b class="mb" style="left:856px;top:601px;width:1px"></b>
<b class="mp" style="left:856px;top:601px;width:1px"></b>
<b class="mb" style="left:856px;top:603px;width:1px"></b>
<b class="mkq" style="left:859px;top:605px;width:1px"></b>
<b class="mk" style="left:860px;top:605px;width:5px"></b>
<b class="mkq" style="left:865px;top:605px;width:1px"></b>
<b class="mp" style="left:866px;top:605px;width:1px"></b>
<b class="msq" style="left:868px;top:605px;width:1px"></b>
<b class="ms" style="left:869px;top:605px;width:32px"></b>
<b class="msq" style="left:901px;top:605px;width:1px"></b>
<b class="mp" style="left:902px;top:605px;width:1px"></b>
<b class="mkq" style="left:859px;top:607px;width:1px"></b>
<b class="mk" style="left:860px;top:607px;width:6px"></b>
<b class="mkq" style="left:866px;top:607px;width:1px"></b>
<b class="mp" style="left:867px;top:607px;width:1px"></b>
<b class="mb" style="left:869px;top:607px;width:1px"></b>
<b class="mb" style="left:862px;top:609px;width:1px"></b>
<b class="mkq" style="left:865px;top:611px;width:1px"></b>
<b class="mk" style="left:866px;top:611px;width:10px"></b>
<b class="mkq" style="left:876px;top:611px;width:1px"></b>
<b class="mp" style="left:877px;top:611px;width:1px"></b>
<b class="msq" style="left:879px;top:611px;width:1px"></b>
<b class="ms" style="left:879px;top:611px;width:1px"></b>
<b class="msq" style="left:880px;top:611px;width:1px"></b>
<b class="mp" style="left:881px;top:611px;width:1px"></b>
<b class="mkq" style="left:865px;top:613px;width:1px"></b>
<b class="mk" style="left:866px;top:613px;width:5px"></b>
<b class="mkq" style="left:871px;top:613px;width:1px"></b>
<b class="mp" style="left:872px;top:613px;width:1px"></b>
<b class="msq" style="left:874px;top:613px;width:1px"></b>
<b class="ms" style="left:874px;top:613px;width:5px"></b>
<b class="msq" style="left:879px;top:613px;width:1px"></b>
<b class="mb" style="left:862px;top:615px;width:1px"></b>
<b class="mb" style="left:859px;top:617px;width:1px"></b>
<b class="mb" style="left:856px;top:619px;width:1px"></b>
<b class="mp" style="left:856px;top:619px;width:1px"></b>
<b class="mb" style="left:856px;top:621px;width:1px"></b>
<b class="mkq" style="left:859px;top:623px;width:1px"></b>
<b class="mk" style="left:860px;top:623px;width:3px"></b>
<b class="mkq" style="left:863px;top:623px;width:1px"></b>
<b class="mp" style="left:864px;top:623px;width:1px"></b>
<b class="msq" style="left:865px;top:623px;width:1px"></b>
<b class="ms" style="left:866px;top:623px;width:4px"></b>
<b class="ms" style="left:870px;top:623px;width:5px"></b>
<b class="ms" style="left:876px;top:623px;width:5px"></b>
<b class="msq" style="left:881px;top:623px;width:1px"></b>
<b class="mp" style="left:882px;top:623px;width:1px"></b>
<b class="mkq" style="left:859px;top:625px;width:1px"></b>
<b class="mk" style="left:860px;top:625px;width:5px"></b>
<b class="mkq" style="left:865px;top:625px;width:1px"></b>
<b class="mp" style="left:866px;top:625px;width:1px"></b>
<b class="msq" style="left:868px;top:625px;width:1px"></b>
<b class="ms" style="left:869px;top:625px;width:37px"></b>
<b class="msq" style="left:906px;top:625px;width:1px"></b>
<b class="mp" style="left:907px;top:625px;width:1px"></b>
<b class="mkq" style="left:859px;top:627px;width:1px"></b>
<b class="mk" style="left:860px;top:627px;width:5px"></b>
<b class="mkq" style="left:865px;top:627px;width:1px"></b>
<b class="mp" style="left:865px;top:627px;width:1px"></b>
<b class="mb" style="left:867px;top:627px;width:1px"></b>
<b class="msq" style="left:868px;top:627px;width:1px"></b>
<b class="ms" style="left:869px;top:627px;width:4px"></b>
<b class="ms" style="left:874px;top:627px;width:2px"></b>
<b class="msq" style="left:876px;top:627px;width:1px"></b>
<b class="mb" style="left:877px;top:627px;width:1px"></b>
<b class="mp" style="left:878px;top:627px;width:1px"></b>
<b class="mkq" style="left:859px;top:629px;width:1px"></b>
<b class="mk" style="left:860px;top:629px;width:6px"></b>
<b class="mkq" style="left:866px;top:629px;width:1px"></b>
<b class="mp" style="left:867px;top:629px;width:1px"></b>
<b class="mb" style="left:869px;top:629px;width:1px"></b>
<b class="mb" style="left:862px;top:631px;width:1px"></b>
<b class="mkq" style="left:865px;top:633px;width:1px"></b>
<b class="mk" style="left:866px;top:633px;width:10px"></b>
<b class="mkq" style="left:876px;top:633px;width:1px"></b>
<b class="mp" style="left:877px;top:633px;width:1px"></b>
<b class="msq" style="left:879px;top:633px;width:1px"></b>
<b class="ms" style="left:879px;top:633px;width:1px"></b>
<b class="msq" style="left:880px;top:633px;width:1px"></b>
<b class="mp" style="left:881px;top:633px;width:1px"></b>
<b class="mkq" style="left:865px;top:635px;width:1px"></b>
<b class="mk" style="left:866px;top:635px;width:4px"></b>
<b class="mkq" style="left:870px;top:635px;width:1px"></b>
<b class="mp" style="left:870px;top:635px;width:1px"></b>
<b class="mt" style="left:872px;top:635px;width:3px"></b>
<b class="mb" style="left:862px;top:637px;width:1px"></b>
<b class="mb" style="left:859px;top:639px;width:1px"></b>
<b class="mb" style="left:856px;top:641px;width:1px"></b>
<b class="mp" style="left:856px;top:641px;width:1px"></b>
<b class="mb" style="left:856px;top:643px;width:1px"></b>
<b class="mkq" style="left:859px;top:645px;width:1px"></b>
<b class="mk" style="left:860px;top:645px;width:3px"></b>
<b class="mkq" style="left:863px;top:645px;width:1px"></b>
<b class="mp" style="left:864px;top:645px;width:1px"></b>
<b class="msq" style="left:865px;top:645px;width:1px"></b>
<b class="ms" style="left:866px;top:645px;width:6px"></b>
<b class="msq" style="left:872px;top:645px;width:1px"></b>
<b class="mp" style="left:873px;top:645px;width:1px"></b>
<b class="mkq" style="left:859px;top:647px;width:1px"></b>
<b class="mk" style="left:860px;top:647px;width:5px"></b>
<b class="mkq" style="left:865px;top:647px;width:1px"></b>
<b class="mp" style="left:866px;top:647px;width:1px"></b>
<b class="msq" style="left:868px;top:647px;width:1px"></b>
<b class="ms" style="left:869px;top:647px;width:41px"></b>
<b class="msq" style="left:910px;top:647px;width:1px"></b>
<b class="mp" style="left:911px;top:647px;width:1px"></b>
<b class="mkq" style="left:859px;top:649px;width:1px"></b>
<b class="mk" style="left:860px;top:649px;width:6px"></b>
<b class="mkq" style="left:866px;top:649px;width:1px"></b>
<b class="mp" style="left:867px;top:649px;width:1px"></b>
<b class="mb" style="left:869px;top:649px;width:1px"></b>
<b class="mb" style="left:862px;top:651px;width:1px"></b>
<b class="mkq" style="left:865px;top:653px;width:1px"></b>
<b class="mk" style="left:866px;top:653px;width:10px"></b>
<b class="mkq" style="left:876px;top:653px;width:1px"></b>
<b class="mp" style="left:877px;top:653px;width:1px"></b>
<b class="msq" style="left:879px;top:653px;width:1px"></b>
<b class="ms" style="left:879px;top:653px;width:5px"></b>
<b class="msq" style="left:884px;top:653px;width:1px"></b>
<b class="mp" style="left:885px;top:653px;width:1px"></b>
<b class="mkq" style="left:865px;top:655px;width:1px"></b>
<b class="mk" style="left:866px;top:655px;width:5px"></b>
<b class="mkq" style="left:871px;top:655px;width:1px"></b>
<b class="mp" style="left:872px;top:655px;width:1px"></b>
<b class="msq" style="left:874px;top:655px;width:1px"></b>
<b class="ms" style="left:874px;top:655px;width:5px"></b>
<b class="msq" style="left:879px;top:655px;width:1px"></b>
<b class="mb" style="left:862px;top:657px;width:1px"></b>
<b class="mb" style="left:859px;top:659px;width:1px"></b>
<b class="mb" style="left:856px;top:661px;width:1px"></b>
<b class="mp" style="left:856px;top:661px;width:1px"></b>
<b class="mb" style="left:856px;top:663px;width:1px"></b>
<b class="mkq" style="left:859px;top:665px;width:1px"></b>
<b class="mk" style="left:860px;top:665px;width:3px"></b>
<b class="mkq" style="left:863px;top:665px;width:1px"></b>
<b class="mp" style="left:864px;top:665px;width:1px"></b>
<b class="msq" style="left:865px;top:665px;width:1px"></b>
<b class="ms" style="left:866px;top:665px;width:4px"></b>
<b class="ms" style="left:871px;top:665px;width:4px"></b>
<b class="ms" style="left:876px;top:665px;width:7px"></b>
<b class="msq" style="left:883px;top:665px;width:1px"></b>
<b class="mp" style="left:883px;top:665px;width:1px"></b>
<b class="mkq" style="left:859px;top:667px;width:1px"></b>
<b class="mk" style="left:860px;top:667px;width:5px"></b>
<b class="mkq" style="left:865px;top:667px;width:1px"></b>
<b class="mp" style="left:866px;top:667px;width:1px"></b>
<b class="msq" style="left:868px;top:667px;width:1px"></b>
<b class="ms" style="left:869px;top:667px;width:38px"></b>
<b class="msq" style="left:907px;top:667px;width:1px"></b>
<b class="mp" style="left:908px;top:667px;width:1px"></b>
<b class="mkq" style="left:859px;top:669px;width:1px"></b>
<b class="mk" style="left:860px;top:669px;width:5px"></b>
<b class="mkq" style="left:865px;top:669px;width:1px"></b>
<b class="mp" style="left:865px;top:669px;width:1px"></b>
<b class="mb" style="left:867px;top:669px;width:1px"></b>
<b class="msq" style="left:868px;top:669px;width:1px"></b>
<b class="ms" style="left:869px;top:669px;width:6px"></b>
<b class="msq" style="left:876px;top:669px;width:1px"></b>
<b class="mb" style="left:877px;top:669px;width:1px"></b>
<b class="mp" style="left:878px;top:669px;width:1px"></b>
<b class="mkq" style="left:859px;top:671px;width:1px"></b>
<b class="mk" style="left:860px;top:671px;width:6px"></b>
<b class="mkq" style="left:866px;top:671px;width:1px"></b>
<b class="mp" style="left:867px;top:671px;width:1px"></b>
<b class="mb" style="left:869px;top:671px;width:1px"></b>
<b class="mb" style="left:862px;top:673px;width:1px"></b>
<b class="mkq" style="left:865px;top:675px;width:1px"></b>
<b class="mk" style="left:866px;top:675px;width:10px"></b>
<b class="mkq" style="left:876px;top:675px;width:1px"></b>
<b class="mp" style="left:877px;top:675px;width:1px"></b>
<b class="msq" style="left:879px;top:675px;width:1px"></b>
<b class="ms" style="left:879px;top:675px;width:5px"></b>
<b class="msq" style="left:884px;top:675px;width:1px"></b>
<b class="mp" style="left:885px;top:675px;width:1px"></b>
<b class="mkq" style="left:865px;top:677px;width:1px"></b>
<b class="mk" style="left:866px;top:677px;width:4px"></b>
<b class="mkq" style="left:870px;top:677px;width:1px"></b>
<b class="mp" style="left:870px;top:677px;width:1px"></b>
<b class="mt" style="left:872px;top:677px;width:3px"></b>
<b class="mb" style="left:862px;top:679px;width:1px"></b>
<b class="mb" style="left:859px;top:681px;width:1px"></b>
<b class="mb" style="left:856px;top:683px;width:1px"></b>
<b class="mp" style="left:856px;top:683px;width:1px"></b>
<b class="mb" style="left:856px;top:685px;width:1px"></b>
<b class="mkq" style="left:859px;top:687px;width:1px"></b>
<b class="mk" style="left:860px;top:687px;width:3px"></b>
<b class="mkq" style="left:863px;top:687px;width:1px"></b>
<b class="mp" style="left:864px;top:687px;width:1px"></b>
<b class="msq" style="left:865px;top:687px;width:1px"></b>
<b class="ms" style="left:866px;top:687px;width:6px"></b>
<b class="ms" style="left:873px;top:687px;width:4px"></b>
<b class="msq" style="left:877px;top:687px;width:1px"></b>
<b class="mp" style="left:878px;top:687px;width:1px"></b>
<b class="mkq" style="left:859px;top:689px;width:1px"></b>
<b class="mk" style="left:860px;top:689px;width:5px"></b>
<b class="mkq" style="left:865px;top:689px;width:1px"></b>
<b class="mp" style="left:866px;top:689px;width:1px"></b>
<b class="msq" style="left:868px;top:689px;width:1px"></b>
<b class="ms" style="left:869px;top:689px;width:43px"></b>
<b class="msq" style="left:912px;top:689px;width:1px"></b>
<b class="mp" style="left:913px;top:689px;width:1px"></b>
<b class="mkq" style="left:859px;top:691px;width:1px"></b>
<b class="mk" style="left:860px;top:691px;width:6px"></b>
<b class="mkq" style="left:866px;top:691px;width:1px"></b>
<b class="mp" style="left:867px;top:691px;width:1px"></b>
<b class="mb" style="left:869px;top:691px;width:1px"></b>
<b class="mb" style="left:862px;top:693px;width:1px"></b>
<b class="mkq" style="left:865px;top:695px;width:1px"></b>
<b class="mk" style="left:866px;top:695px;width:10px"></b>
<b class="mkq" style="left:876px;top:695px;width:1px"></b>
<b class="mp" style="left:877px;top:695px;width:1px"></b>
<b class="msq" style="left:879px;top:695px;width:1px"></b>
<b class="ms" style="left:879px;top:695px;width:5px"></b>
<b class="msq" style="left:884px;top:695px;width:1px"></b>
<b class="mp" style="left:885px;top:695px;width:1px"></b>
<b class="mkq" style="left:865px;top:697px;width:1px"></b>
<b class="mk" style="left:866px;top:697px;width:5px"></b>
<b class="mkq" style="left:871px;top:697px;width:1px"></b>
<b class="mp" style="left:872px;top:697px;width:1px"></b>
<b class="msq" style="left:874px;top:697px;width:1px"></b>
<b class="ms" style="left:874px;top:697px;width:5px"></b>
<b class="msq" style="left:879px;top:697px;width:1px"></b>
<b class="mb" style="left:862px;top:699px;width:1px"></b>
<b class="mp" style="left:863px;top:699px;width:1px"></b>
<b class="mb" style="left:862px;top:701px;width:1px"></b>
<b class="mkq" style="left:865px;top:703px;width:1px"></b>
<b class="mk" style="left:866px;top:703px;width:10px"></b>
<b class="mkq" style="left:876px;top:703px;width:1px"></b>
<b class="mp" style="left:877px;top:703px;width:1px"></b>
<b class="msq" style="left:879px;top:703px;width:1px"></b>
<b class="ms" style="left:879px;top:703px;width:5px"></b>
<b class="msq" style="left:884px;top:703px;width:1px"></b>
<b class="mp" style="left:885px;top:703px;width:1px"></b>
<b class="mkq" style="left:865px;top:705px;width:1px"></b>
<b class="mk" style="left:866px;top:705px;width:4px"></b>
<b class="mkq" style="left:870px;top:705px;width:1px"></b>
<b class="mp" style="left:870px;top:705px;width:1px"></b>
<b class="msq" style="left:872px;top:705px;width:1px"></b>
<b class="ms" style="left:873px;top:705px;width:2px"></b>
<b class="msq" style="left:875px;top:705px;width:1px"></b>
<b class="mb" style="left:862px;top:707px;width:1px"></b>
<b class="mb" style="left:859px;top:709px;width:1px"></b>
<b class="mb" style="left:856px;top:711px;width:1px"></b>
<b class="mp" style="left:856px;top:711px;width:1px"></b>
<b class="mb" style="left:856px;top:713px;width:1px"></b>
<b class="mkq" style="left:859px;top:715px;width:1px"></b>
<b class="mk" style="left:860px;top:715px;width:3px"></b>
<b class="mkq" style="left:863px;top:715px;width:1px"></b>
<b class="mp" style="left:864px;top:715px;width:1px"></b>
<b class="msq" style="left:865px;top:715px;width:1px"></b>
<b class="ms" style="left:866px;top:715px;width:6px"></b>
<b class="ms" style="left:873px;top:715px;width:6px"></b>
<b class="ms" style="left:879px;top:715px;width:6px"></b>
<b class="ms" style="left:886px;top:715px;width:4px"></b>
<b class="msq" style="left:890px;top:715px;width:1px"></b>
<b class="mp" style="left:891px;top:715px;width:1px"></b>
<b class="mkq" style="left:859px;top:717px;width:1px"></b>
<b class="mk" style="left:860px;top:717px;width:5px"></b>
<b class="mkq" style="left:865px;top:717px;width:1px"></b>
<b class="mp" style="left:866px;top:717px;width:1px"></b>
<b class="msq" style="left:868px;top:717px;width:1px"></b>
<b class="ms" style="left:869px;top:717px;width:57px"></b>
<b class="msq" style="left:926px;top:717px;width:1px"></b>
<b class="mp" style="left:927px;top:717px;width:1px"></b>
<b class="mkq" style="left:859px;top:719px;width:1px"></b>
<b class="mk" style="left:860px;top:719px;width:5px"></b>
<b class="mkq" style="left:865px;top:719px;width:1px"></b>
<b class="mp" style="left:865px;top:719px;width:1px"></b>
<b class="mb" style="left:867px;top:719px;width:1px"></b>
<b class="msq" style="left:868px;top:719px;width:1px"></b>
<b class="ms" style="left:869px;top:719px;width:5px"></b>
<b class="ms" style="left:875px;top:719px;width:1px"></b>
<b class="msq" style="left:876px;top:719px;width:1px"></b>
<b class="mb" style="left:877px;top:719px;width:1px"></b>
<b class="mp" style="left:878px;top:719px;width:1px"></b>
<b class="mkq" style="left:859px;top:721px;width:1px"></b>
<b class="mk" style="left:860px;top:721px;width:6px"></b>
<b class="mkq" style="left:866px;top:721px;width:1px"></b>
<b class="mp" style="left:867px;top:721px;width:1px"></b>
<b class="mb" style="left:869px;top:721px;width:1px"></b>
<b class="mb" style="left:862px;top:723px;width:1px"></b>
<b class="mkq" style="left:865px;top:725px;width:1px"></b>
<b class="mk" style="left:866px;top:725px;width:10px"></b>
<b class="mkq" style="left:876px;top:725px;width:1px"></b>
<b class="mp" style="left:877px;top:725px;width:1px"></b>
<b class="msq" style="left:879px;top:725px;width:1px"></b>
<b class="ms" style="left:879px;top:725px;width:5px"></b>
<b class="msq" style="left:884px;top:725px;width:1px"></b>
<b class="mp" style="left:885px;top:725px;width:1px"></b>
<b class="mkq" style="left:865px;top:727px;width:1px"></b>
<b class="mk" style="left:866px;top:727px;width:5px"></b>
<b class="mkq" style="left:871px;top:727px;width:1px"></b>
<b class="mp" style="left:872px;top:727px;width:1px"></b>
<b class="msq" style="left:874px;top:727px;width:1px"></b>
<b class="ms" style="left:874px;top:727px;width:5px"></b>
<b class="msq" style="left:879px;top:727px;width:1px"></b>
<b class="mb" style="left:862px;top:729px;width:1px"></b>
<b class="mb" style="left:859px;top:731px;width:1px"></b>
<b class="mb" style="left:856px;top:733px;width:1px"></b>
<b class="mp" style="left:856px;top:733px;width:1px"></b>
<b class="mb" style="left:856px;top:735px;width:1px"></b>
<b class="mkq" style="left:859px;top:737px;width:1px"></b>
<b class="mk" style="left:860px;top:737px;width:3px"></b>
<b class="mkq" style="left:863px;top:737px;width:1px"></b>
<b class="mp" style="left:864px;top:737px;width:1px"></b>
<b class="msq" style="left:865px;top:737px;width:1px"></b>
<b class="ms" style="left:866px;top:737px;width:6px"></b>
<b class="ms" style="left:873px;top:737px;width:4px"></b>
<b class="msq" style="left:877px;top:737px;width:1px"></b>
<b class="mp" style="left:878px;top:737px;width:1px"></b>
<b class="mkq" style="left:859px;top:739px;width:1px"></b>
<b class="mk" style="left:860px;top:739px;width:5px"></b>
<b class="mkq" style="left:865px;top:739px;width:1px"></b>
<b class="mp" style="left:866px;top:739px;width:1px"></b>
<b class="msq" style="left:868px;top:739px;width:1px"></b>
<b class="ms" style="left:869px;top:739px;width:37px"></b>
<b class="msq" style="left:906px;top:739px;width:1px"></b>
<b class="mp" style="left:907px;top:739px;width:1px"></b>
<b class="mkq" style="left:859px;top:741px;width:1px"></b>
<b class="mk" style="left:860px;top:741px;width:6px"></b>
<b class="mkq" style="left:866px;top:741px;width:1px"></b>
<b class="mp" style="left:867px;top:741px;width:1px"></b>
<b class="mb" style="left:869px;top:741px;width:1px"></b>
<b class="mb" style="left:862px;top:743px;width:1px"></b>
<b class="mkq" style="left:865px;top:745px;width:1px"></b>
<b class="mk" style="left:866px;top:745px;width:10px"></b>
<b class="mkq" style="left:876px;top:745px;width:1px"></b>
<b class="mp" style="left:877px;top:745px;width:1px"></b>
<b class="msq" style="left:879px;top:745px;width:1px"></b>
<b class="ms" style="left:879px;top:745px;width:1px"></b>
<b class="msq" style="left:880px;top:745px;width:1px"></b>
<b class="mp" style="left:881px;top:745px;width:1px"></b>
<b class="mkq" style="left:865px;top:747px;width:1px"></b>
<b class="mk" style="left:866px;top:747px;width:5px"></b>
<b class="mkq" style="left:871px;top:747px;width:1px"></b>
<b class="mp" style="left:872px;top:747px;width:1px"></b>
<b class="msq" style="left:874px;top:747px;width:1px"></b>
<b class="ms" style="left:874px;top:747px;width:5px"></b>
<b class="msq" style="left:879px;top:747px;width:1px"></b>
<b class="mb" style="left:862px;top:749px;width:1px"></b>
<b class="mb" style="left:859px;top:751px;width:1px"></b>
<b class="mb" style="left:856px;top:753px;width:1px"></b>
<b class="mp" style="left:856px;top:753px;width:1px"></b>
<b class="mb" style="left:856px;top:755px;width:1px"></b>
<b class="mkq" style="left:859px;top:757px;width:1px"></b>
<b class="mk" style="left:860px;top:757px;width:3px"></b>
<b class="mkq" style="left:863px;top:757px;width:1px"></b>
<b class="mp" style="left:864px;top:757px;width:1px"></b>
<b class="msq" style="left:865px;top:757px;width:1px"></b>
<b class="ms" style="left:866px;top:757px;width:5px"></b>
<b class="msq" style="left:872px;top:757px;width:1px"></b>
<b class="mp" style="left:873px;top:757px;width:1px"></b>
<b class="mkq" style="left:859px;top:759px;width:1px"></b>
<b class="mk" style="left:860px;top:759px;width:5px"></b>
<b class="mkq" style="left:865px;top:759px;width:1px"></b>
<b class="mp" style="left:866px;top:759px;width:1px"></b>
<b class="msq" style="left:868px;top:759px;width:1px"></b>
<b class="ms" style="left:869px;top:759px;width:28px"></b>
<b class="msq" style="left:897px;top:759px;width:1px"></b>
<b class="mp" style="left:898px;top:759px;width:1px"></b>
<b class="mkq" style="left:859px;top:761px;width:1px"></b>
<b class="mk" style="left:860px;top:761px;width:5px"></b>
<b class="mkq" style="left:865px;top:761px;width:1px"></b>
<b class="mp" style="left:865px;top:761px;width:1px"></b>
<b class="mb" style="left:867px;top:761px;width:1px"></b>
<b class="msq" style="left:868px;top:761px;width:1px"></b>
<b class="ms" style="left:869px;top:761px;width:7px"></b>
<b class="ms" style="left:877px;top:761px;width:3px"></b>
<b class="msq" style="left:881px;top:761px;width:1px"></b>
<b class="mb" style="left:882px;top:761px;width:1px"></b>
<b class="mp" style="left:883px;top:761px;width:1px"></b>
<b class="mkq" style="left:859px;top:763px;width:1px"></b>
<b class="mk" style="left:860px;top:763px;width:6px"></b>
<b class="mkq" style="left:866px;top:763px;width:1px"></b>
<b class="mp" style="left:867px;top:763px;width:1px"></b>
<b class="mb" style="left:869px;top:763px;width:1px"></b>
<b class="mb" style="left:862px;top:765px;width:1px"></b>
<b class="mkq" style="left:865px;top:767px;width:1px"></b>
<b class="mk" style="left:866px;top:767px;width:10px"></b>
<b class="mkq" style="left:876px;top:767px;width:1px"></b>
<b class="mp" style="left:877px;top:767px;width:1px"></b>
<b class="msq" style="left:879px;top:767px;width:1px"></b>
<b class="ms" style="left:879px;top:767px;width:5px"></b>
<b class="msq" style="left:884px;top:767px;width:1px"></b>
<b class="mp" style="left:885px;top:767px;width:1px"></b>
<b class="mkq" style="left:865px;top:769px;width:1px"></b>
<b class="mk" style="left:866px;top:769px;width:4px"></b>
<b class="mkq" style="left:870px;top:769px;width:1px"></b>
<b class="mp" style="left:870px;top:769px;width:1px"></b>
<b class="mt" style="left:872px;top:769px;width:3px"></b>
<b class="mb" style="left:862px;top:771px;width:1px"></b>
<b class="mb" style="left:859px;top:773px;width:1px"></b>
<b class="mb" style="left:856px;top:775px;width:1px"></b>
<b class="mp" style="left:856px;top:775px;width:1px"></b>
<b class="mb" style="left:856px;top:777px;width:1px"></b>
<b class="mkq" style="left:859px;top:779px;width:1px"></b>
<b class="mk" style="left:860px;top:779px;width:3px"></b>
<b class="mkq" style="left:863px;top:779px;width:1px"></b>
<b class="mp" style="left:864px;top:779px;width:1px"></b>
<b class="msq" style="left:865px;top:779px;width:1px"></b>
<b class="ms" style="left:866px;top:779px;width:6px"></b>
<b class="ms" style="left:873px;top:779px;width:6px"></b>
<b class="ms" style="left:879px;top:779px;width:4px"></b>
<b class="ms" style="left:883px;top:779px;width:1px"></b>
<b class="msq" style="left:884px;top:779px;width:1px"></b>
<b class="mp" style="left:885px;top:779px;width:1px"></b>
<b class="mkq" style="left:859px;top:781px;width:1px"></b>
<b class="mk" style="left:860px;top:781px;width:5px"></b>
<b class="mkq" style="left:865px;top:781px;width:1px"></b>
<b class="mp" style="left:866px;top:781px;width:1px"></b>
<b class="msq" style="left:868px;top:781px;width:1px"></b>
<b class="ms" style="left:869px;top:781px;width:37px"></b>
<b class="msq" style="left:906px;top:781px;width:1px"></b>
<b class="mp" style="left:906px;top:781px;width:1px"></b>
<b class="mkq" style="left:859px;top:783px;width:1px"></b>
<b class="mk" style="left:860px;top:783px;width:6px"></b>
<b class="mkq" style="left:866px;top:783px;width:1px"></b>
<b class="mp" style="left:867px;top:783px;width:1px"></b>
<b class="mb" style="left:869px;top:783px;width:1px"></b>
<b class="mb" style="left:862px;top:785px;width:1px"></b>
<b class="mkq" style="left:865px;top:787px;width:1px"></b>
<b class="mk" style="left:866px;top:787px;width:10px"></b>
<b class="mkq" style="left:876px;top:787px;width:1px"></b>
<b class="mp" style="left:877px;top:787px;width:1px"></b>
<b class="msq" style="left:879px;top:787px;width:1px"></b>
<b class="ms" style="left:879px;top:787px;width:1px"></b>
<b class="msq" style="left:880px;top:787px;width:1px"></b>
<b class="mp" style="left:881px;top:787px;width:1px"></b>
<b class="mkq" style="left:865px;top:789px;width:1px"></b>
<b class="mk" style="left:866px;top:789px;width:4px"></b>
<b class="mkq" style="left:870px;top:789px;width:1px"></b>
<b class="mp" style="left:870px;top:789px;width:1px"></b>
<b class="mt" style="left:872px;top:789px;width:3px"></b>
<b class="mb" style="left:862px;top:791px;width:1px"></b>
<b class="mb" style="left:859px;top:793px;width:1px"></b>
<b class="mb" style="left:856px;top:795px;width:1px"></b>
<b class="mp" style="left:856px;top:795px;width:1px"></b>
<b class="mb" style="left:856px;top:797px;width:1px"></b>
<b class="mkq" style="left:859px;top:799px;width:1px"></b>
<b class="mk" style="left:860px;top:799px;width:3px"></b>
<b class="mkq" style="left:863px;top:799px;width:1px"></b>
<b class="mp" style="left:864px;top:799px;width:1px"></b>
<b class="msq" style="left:865px;top:799px;width:1px"></b>
<b class="ms" style="left:866px;top:799px;width:5px"></b>
<b class="ms" style="left:872px;top:799px;width:4px"></b>
<b class="msq" style="left:876px;top:799px;width:1px"></b>
<b class="mp" style="left:877px;top:799px;width:1px"></b>
<b class="mkq" style="left:859px;top:801px;width:1px"></b>
<b class="mk" style="left:860px;top:801px;width:5px"></b>
<b class="mkq" style="left:865px;top:801px;width:1px"></b>
<b class="mp" style="left:866px;top:801px;width:1px"></b>
<b class="msq" style="left:868px;top:801px;width:1px"></b>
<b class="ms" style="left:869px;top:801px;width:45px"></b>
<b class="msq" style="left:914px;top:801px;width:1px"></b>
<b class="mp" style="left:915px;top:801px;width:1px"></b>
<b class="mkq" style="left:859px;top:803px;width:1px"></b>
<b class="mk" style="left:860px;top:803px;width:6px"></b>
<b class="mkq" style="left:866px;top:803px;width:1px"></b>
<b class="mp" style="left:867px;top:803px;width:1px"></b>
<b class="mb" style="left:869px;top:803px;width:1px"></b>
<b class="mb" style="left:862px;top:805px;width:1px"></b>
<b class="mkq" style="left:865px;top:807px;width:1px"></b>
<b class="mk" style="left:866px;top:807px;width:10px"></b>
<b class="mkq" style="left:876px;top:807px;width:1px"></b>
<b class="mp" style="left:877px;top:807px;width:1px"></b>
<b class="msq" style="left:879px;top:807px;width:1px"></b>
<b class="ms" style="left:879px;top:807px;width:5px"></b>
<b class="msq" style="left:884px;top:807px;width:1px"></b>
<b class="mp" style="left:885px;top:807px;width:1px"></b>
<b class="mkq" style="left:865px;top:809px;width:1px"></b>
<b class="mk" style="left:866px;top:809px;width:4px"></b>
<b class="mkq" style="left:870px;top:809px;width:1px"></b>
<b class="mp" style="left:870px;top:809px;width:1px"></b>
<b class="mt" style="left:872px;top:809px;width:3px"></b>
<b class="mb" style="left:862px;top:811px;width:1px"></b>
<b class="mb" style="left:859px;top:813px;width:1px"></b>
<b class="mb" style="left:856px;top:815px;width:1px"></b>
<b class="mp" style="left:856px;top:815px;width:1px"></b>
<b class="mb" style="left:856px;top:817px;width:1px"></b>
<b class="mkq" style="left:859px;top:819px;width:1px"></b>
<b class="mk" style="left:860px;top:819px;width:3px"></b>
<b class="mkq" style="left:863px;top:819px;width:1px"></b>
<b class="mp" style="left:864px;top:819px;width:1px"></b>
<b class="msq" style="left:865px;top:819px;width:1px"></b>
<b class="ms" style="left:866px;top:819px;width:4px"></b>
<b class="msq" style="left:871px;top:819px;width:1px"></b>
<b class="mp" style="left:872px;top:819px;width:1px"></b>
<b class="mkq" style="left:859px;top:821px;width:1px"></b>
<b class="mk" style="left:860px;top:821px;width:5px"></b>
<b class="mkq" style="left:865px;top:821px;width:1px"></b>
<b class="mp" style="left:866px;top:821px;width:1px"></b>
<b class="msq" style="left:868px;top:821px;width:1px"></b>
<b class="ms" style="left:869px;top:821px;width:34px"></b>
<b class="msq" style="left:903px;top:821px;width:1px"></b>
<b class="mp" style="left:904px;top:821px;width:1px"></b>
<b class="mkq" style="left:859px;top:823px;width:1px"></b>
<b class="mk" style="left:860px;top:823px;width:6px"></b>
<b class="mkq" style="left:866px;top:823px;width:1px"></b>
<b class="mp" style="left:867px;top:823px;width:1px"></b>
<b class="mb" style="left:869px;top:823px;width:1px"></b>
<b class="mb" style="left:862px;top:825px;width:1px"></b>
<b class="mkq" style="left:865px;top:827px;width:1px"></b>
<b class="mk" style="left:866px;top:827px;width:10px"></b>
<b class="mkq" style="left:876px;top:827px;width:1px"></b>
<b class="mp" style="left:877px;top:827px;width:1px"></b>
<b class="msq" style="left:879px;top:827px;width:1px"></b>
<b class="ms" style="left:879px;top:827px;width:5px"></b>
<b class="msq" style="left:884px;top:827px;width:1px"></b>
<b class="mp" style="left:885px;top:827px;width:1px"></b>
<b class="mkq" style="left:865px;top:829px;width:1px"></b>
<b class="mk" style="left:866px;top:829px;width:4px"></b>
<b class="mkq" style="left:870px;top:829px;width:1px"></b>
<b class="mp" style="left:870px;top:829px;width:1px"></b>
<b class="mt" style="left:872px;top:829px;width:3px"></b>
<b class="mb" style="left:862px;top:831px;width:1px"></b>
<b class="mb" style="left:859px;top:833px;width:1px"></b>
<b class="mb" style="left:856px;top:835px;width:1px"></b>
<b class="mp" style="left:856px;top:835px;width:1px"></b>
<b class="mb" style="left:856px;top:837px;width:1px"></b>
<b class="mkq" style="left:859px;top:839px;width:1px"></b>
<b class="mk" style="left:860px;top:839px;width:3px"></b>
<b class="mkq" style="left:863px;top:839px;width:1px"></b>
<b class="mp" style="left:864px;top:839px;width:1px"></b>
<b class="msq" style="left:865px;top:839px;width:1px"></b>
<b class="ms" style="left:866px;top:839px;width:4px"></b>
<b class="ms" style="left:870px;top:839px;width:4px"></b>
<b class="ms" style="left:874px;top:839px;width:3px"></b>
<b class="ms" style="left:878px;top:839px;width:1px"></b>
<b class="msq" style="left:879px;top:839px;width:1px"></b>
<b class="mp" style="left:879px;top:839px;width:1px"></b>
<b class="mkq" style="left:859px;top:841px;width:1px"></b>
<b class="mk" style="left:860px;top:841px;width:5px"></b>
<b class="mkq" style="left:865px;top:841px;width:1px"></b>
<b class="mp" style="left:866px;top:841px;width:1px"></b>
<b class="msq" style="left:868px;top:841px;width:1px"></b>
<b class="ms" style="left:869px;top:841px;width:32px"></b>
<b class="msq" style="left:901px;top:841px;width:1px"></b>
<b class="mp" style="left:902px;top:841px;width:1px"></b>
<b class="mkq" style="left:859px;top:843px;width:1px"></b>
<b class="mk" style="left:860px;top:843px;width:5px"></b>
<b class="mkq" style="left:865px;top:843px;width:1px"></b>
<b class="mp" style="left:865px;top:843px;width:1px"></b>
<b class="mb" style="left:867px;top:843px;width:1px"></b>
<b class="msq" style="left:868px;top:843px;width:1px"></b>
<b class="ms" style="left:869px;top:843px;width:7px"></b>
<b class="ms" style="left:877px;top:843px;width:6px"></b>
<b class="ms" style="left:883px;top:843px;width:5px"></b>
<b class="ms" style="left:889px;top:843px;width:3px"></b>
<b class="ms" style="left:893px;top:843px;width:6px"></b>
<b class="ms" style="left:900px;top:843px;width:2px"></b>
<b class="ms" style="left:903px;top:843px;width:5px"></b>
<b class="ms" style="left:909px;top:843px;width:6px"></b>
<b class="ms" style="left:916px;top:843px;width:2px"></b>
<b class="msq" style="left:918px;top:843px;width:1px"></b>
<b class="mb" style="left:919px;top:843px;width:1px"></b>
<b class="mp" style="left:920px;top:843px;width:1px"></b>
<b class="mkq" style="left:859px;top:845px;width:1px"></b>
<b class="mk" style="left:860px;top:845px;width:6px"></b>
<b class="mkq" style="left:866px;top:845px;width:1px"></b>
<b class="mp" style="left:867px;top:845px;width:1px"></b>
<b class="mb" style="left:869px;top:845px;width:1px"></b>
<b class="mb" style="left:862px;top:847px;width:1px"></b>
<b class="mkq" style="left:865px;top:849px;width:1px"></b>
<b class="mk" style="left:866px;top:849px;width:10px"></b>
<b class="mkq" style="left:876px;top:849px;width:1px"></b>
<b class="mp" style="left:877px;top:849px;width:1px"></b>
<b class="msq" style="left:879px;top:849px;width:1px"></b>
<b class="ms" style="left:879px;top:849px;width:5px"></b>
<b class="msq" style="left:884px;top:849px;width:1px"></b>
<b class="mp" style="left:885px;top:849px;width:1px"></b>
<b class="mkq" style="left:865px;top:851px;width:1px"></b>
<b class="mk" style="left:866px;top:851px;width:4px"></b>
<b class="mkq" style="left:870px;top:851px;width:1px"></b>
<b class="mp" style="left:870px;top:851px;width:1px"></b>
<b class="mt" style="left:872px;top:851px;width:3px"></b>
<b class="mb" style="left:862px;top:853px;width:1px"></b>
<b class="mb" style="left:859px;top:855px;width:1px"></b>
<b class="mb" style="left:856px;top:857px;width:1px"></b>
<b class="mp" style="left:856px;top:857px;width:1px"></b>
<b class="mb" style="left:856px;top:859px;width:1px"></b>
<b class="mkq" style="left:859px;top:861px;width:1px"></b>
<b class="mk" style="left:860px;top:861px;width:3px"></b>
<b class="mkq" style="left:863px;top:861px;width:1px"></b>
<b class="mp" style="left:864px;top:861px;width:1px"></b>
<b class="msq" style="left:865px;top:861px;width:1px"></b>
<b class="ms" style="left:866px;top:861px;width:3px"></b>
<b class="ms" style="left:870px;top:861px;width:5px"></b>
<b class="msq" style="left:875px;top:861px;width:1px"></b>
<b class="mp" style="left:876px;top:861px;width:1px"></b>
<b class="mkq" style="left:859px;top:863px;width:1px"></b>
<b class="mk" style="left:860px;top:863px;width:5px"></b>
<b class="mkq" style="left:865px;top:863px;width:1px"></b>
<b class="mp" style="left:866px;top:863px;width:1px"></b>
<b class="msq" style="left:868px;top:863px;width:1px"></b>
<b class="ms" style="left:869px;top:863px;width:34px"></b>
<b class="msq" style="left:903px;top:863px;width:1px"></b>
<b class="mp" style="left:904px;top:863px;width:1px"></b>
<b class="mkq" style="left:859px;top:865px;width:1px"></b>
<b class="mk" style="left:860px;top:865px;width:5px"></b>
<b class="mkq" style="left:865px;top:865px;width:1px"></b>
<b class="mp" style="left:865px;top:865px;width:1px"></b>
<b class="mb" style="left:867px;top:865px;width:1px"></b>
<b class="msq" style="left:868px;top:865px;width:1px"></b>
<b class="ms" style="left:869px;top:865px;width:2px"></b>
<b class="ms" style="left:872px;top:865px;width:3px"></b>
<b class="ms" style="left:876px;top:865px;width:5px"></b>
<b class="ms" style="left:882px;top:865px;width:3px"></b>
<b class="ms" style="left:886px;top:865px;width:2px"></b>
<b class="ms" style="left:889px;top:865px;width:4px"></b>
<b class="ms" style="left:894px;top:865px;width:7px"></b>
<b class="ms" style="left:902px;top:865px;width:1px"></b>
<b class="msq" style="left:903px;top:865px;width:1px"></b>
<b class="mb" style="left:904px;top:865px;width:1px"></b>
<b class="mp" style="left:905px;top:865px;width:1px"></b>
<b class="mkq" style="left:859px;top:867px;width:1px"></b>
<b class="mk" style="left:860px;top:867px;width:6px"></b>
<b class="mkq" style="left:866px;top:867px;width:1px"></b>
<b class="mp" style="left:867px;top:867px;width:1px"></b>
<b class="mb" style="left:869px;top:867px;width:1px"></b>
<b class="mb" style="left:862px;top:869px;width:1px"></b>
<b class="mkq" style="left:865px;top:871px;width:1px"></b>
<b class="mk" style="left:866px;top:871px;width:10px"></b>
<b class="mkq" style="left:876px;top:871px;width:1px"></b>
<b class="mp" style="left:877px;top:871px;width:1px"></b>
<b class="msq" style="left:879px;top:871px;width:1px"></b>
<b class="ms" style="left:879px;top:871px;width:5px"></b>
<b class="msq" style="left:884px;top:871px;width:1px"></b>
<b class="mp" style="left:885px;top:871px;width:1px"></b>
<b class="mkq" style="left:865px;top:873px;width:1px"></b>
<b class="mk" style="left:866px;top:873px;width:4px"></b>
<b class="mkq" style="left:870px;top:873px;width:1px"></b>
<b class="mp" style="left:870px;top:873px;width:1px"></b>
<b class="mt" style="left:872px;top:873px;width:3px"></b>
<b class="mb" style="left:862px;top:875px;width:1px"></b>
<b class="mb" style="left:859px;top:877px;width:1px"></b>
<b class="mb" style="left:856px;top:879px;width:1px"></b>
<b class="mp" style="left:856px;top:879px;width:1px"></b>
<b class="mb" style="left:856px;top:881px;width:1px"></b>
<b class="mkq" style="left:859px;top:883px;width:1px"></b>
<b class="mk" style="left:860px;top:883px;width:3px"></b>
<b class="mkq" style="left:863px;top:883px;width:1px"></b>
<b class="mp" style="left:864px;top:883px;width:1px"></b>
<b class="msq" style="left:865px;top:883px;width:1px"></b>
<b class="ms" style="left:866px;top:883px;width:4px"></b>
<b class="msq" style="left:870px;top:883px;width:1px"></b>
<b class="mp" style="left:870px;top:883px;width:1px"></b>
<b class="mkq" style="left:859px;top:885px;width:1px"></b>
<b class="mk" style="left:860px;top:885px;width:5px"></b>
<b class="mkq" style="left:865px;top:885px;width:1px"></b>
<b class="mp" style="left:866px;top:885px;width:1px"></b>
<b class="msq" style="left:868px;top:885px;width:1px"></b>
<b class="ms" style="left:869px;top:885px;width:41px"></b>
<b class="msq" style="left:910px;top:885px;width:1px"></b>
<b class="mp" style="left:911px;top:885px;width:1px"></b>
<b class="mkq" style="left:859px;top:887px;width:1px"></b>
<b class="mk" style="left:860px;top:887px;width:5px"></b>
<b class="mkq" style="left:865px;top:887px;width:1px"></b>
<b class="mp" style="left:865px;top:887px;width:1px"></b>
<b class="mb" style="left:867px;top:887px;width:1px"></b>
<b class="msq" style="left:868px;top:887px;width:1px"></b>
<b class="ms" style="left:869px;top:887px;width:6px"></b>
<b class="ms" style="left:876px;top:887px;width:5px"></b>
<b class="msq" style="left:881px;top:887px;width:1px"></b>
<b class="mb" style="left:882px;top:887px;width:1px"></b>
<b class="mp" style="left:883px;top:887px;width:1px"></b>
<b class="mkq" style="left:859px;top:889px;width:1px"></b>
<b class="mk" style="left:860px;top:889px;width:6px"></b>
<b class="mkq" style="left:866px;top:889px;width:1px"></b>
<b class="mp" style="left:867px;top:889px;width:1px"></b>
<b class="mb" style="left:869px;top:889px;width:1px"></b>
<b class="mb" style="left:862px;top:891px;width:1px"></b>
<b class="mkq" style="left:865px;top:893px;width:1px"></b>
<b class="mk" style="left:866px;top:893px;width:10px"></b>
<b class="mkq" style="left:876px;top:893px;width:1px"></b>
<b class="mp" style="left:877px;top:893px;width:1px"></b>
<b class="msq" style="left:879px;top:893px;width:1px"></b>
<b class="ms" style="left:879px;top:893px;width:1px"></b>
<b class="msq" style="left:880px;top:893px;width:1px"></b>
<b class="mp" style="left:881px;top:893px;width:1px"></b>
<b class="mkq" style="left:865px;top:895px;width:1px"></b>
<b class="mk" style="left:866px;top:895px;width:5px"></b>
<b class="mkq" style="left:871px;top:895px;width:1px"></b>
<b class="mp" style="left:872px;top:895px;width:1px"></b>
<b class="msq" style="left:874px;top:895px;width:1px"></b>
<b class="ms" style="left:874px;top:895px;width:5px"></b>
<b class="msq" style="left:879px;top:895px;width:1px"></b>
<b class="mb" style="left:862px;top:897px;width:1px"></b>
<b class="mb" style="left:859px;top:899px;width:1px"></b>
<b class="mb" style="left:856px;top:901px;width:1px"></b>
<b class="mp" style="left:856px;top:901px;width:1px"></b>
<b class="mb" style="left:856px;top:903px;width:1px"></b>
<b class="mkq" style="left:859px;top:905px;width:1px"></b>
<b class="mk" style="left:860px;top:905px;width:3px"></b>
<b class="mkq" style="left:863px;top:905px;width:1px"></b>
<b class="mp" style="left:864px;top:905px;width:1px"></b>
<b class="msq" style="left:865px;top:905px;width:1px"></b>
<b class="ms" style="left:866px;top:905px;width:18px"></b>
<b class="ms" style="left:885px;top:905px;width:7px"></b>
<b class="msq" style="left:892px;top:905px;width:1px"></b>
<b class="mp" style="left:892px;top:905px;width:1px"></b>
<b class="mkq" style="left:859px;top:907px;width:1px"></b>
<b class="mk" style="left:860px;top:907px;width:5px"></b>
<b class="mkq" style="left:865px;top:907px;width:1px"></b>
<b class="mp" style="left:866px;top:907px;width:1px"></b>
<b class="msq" style="left:868px;top:907px;width:1px"></b>
<b class="ms" style="left:869px;top:907px;width:50px"></b>
<b class="msq" style="left:919px;top:907px;width:1px"></b>
<b class="mp" style="left:920px;top:907px;width:1px"></b>
<b class="mkq" style="left:859px;top:909px;width:1px"></b>
<b class="mk" style="left:860px;top:909px;width:6px"></b>
<b class="mkq" style="left:866px;top:909px;width:1px"></b>
<b class="mp" style="left:867px;top:909px;width:1px"></b>
<b class="mb" style="left:869px;top:909px;width:1px"></b>
<b class="mb" style="left:862px;top:911px;width:1px"></b>
<b class="mkq" style="left:865px;top:913px;width:1px"></b>
<b class="mk" style="left:866px;top:913px;width:10px"></b>
<b class="mkq" style="left:876px;top:913px;width:1px"></b>
<b class="mp" style="left:877px;top:913px;width:1px"></b>
<b class="msq" style="left:879px;top:913px;width:1px"></b>
<b class="ms" style="left:879px;top:913px;width:1px"></b>
<b class="msq" style="left:880px;top:913px;width:1px"></b>
<b class="mp" style="left:881px;top:913px;width:1px"></b>
<b class="mkq" style="left:865px;top:915px;width:1px"></b>
<b class="mk" style="left:866px;top:915px;width:4px"></b>
<b class="mkq" style="left:870px;top:915px;width:1px"></b>
<b class="mp" style="left:870px;top:915px;width:1px"></b>
<b class="mt" style="left:872px;top:915px;width:3px"></b>
<b class="mb" style="left:862px;top:917px;width:1px"></b>
<b class="mb" style="left:859px;top:919px;width:1px"></b>
<b class="mb" style="left:856px;top:921px;width:1px"></b>
<b class="mp" style="left:856px;top:921px;width:1px"></b>
<b class="mb" style="left:856px;top:923px;width:1px"></b>
<b class="mhlm" style="left:859px;top:925px;width:3px"></b>
<b class="mkq" style="left:862px;top:925px;width:1px"></b>
<b class="mp" style="left:863px;top:925px;width:1px"></b>
<b class="msq" style="left:865px;top:925px;width:1px"></b>
<b class="mhlm" style="left:865px;top:925px;width:5px"></b>
<b class="mhlm" style="left:871px;top:925px;width:4px"></b>
<b class="msq" style="left:875px;top:925px;width:1px"></b>
<b class="mp" style="left:876px;top:925px;width:1px"></b>
<b class="mhl" style="left:876.9px;top:925px;width:64.1px"></b>
<b class="mkq" style="left:859px;top:927px;width:1px"></b>
<b class="mk" style="left:860px;top:927px;width:5px"></b>
<b class="mkq" style="left:865px;top:927px;width:1px"></b>
<b class="mp" style="left:866px;top:927px;width:1px"></b>
<b class="msq" style="left:868px;top:927px;width:1px"></b>
<b class="ms" style="left:869px;top:927px;width:38px"></b>
<b class="msq" style="left:907px;top:927px;width:1px"></b>
<b class="mp" style="left:908px;top:927px;width:1px"></b>
<b class="mkq" style="left:859px;top:929px;width:1px"></b>
<b class="mk" style="left:860px;top:929px;width:5px"></b>
<b class="mkq" style="left:865px;top:929px;width:1px"></b>
<b class="mp" style="left:865px;top:929px;width:1px"></b>
<b class="mb" style="left:867px;top:929px;width:1px"></b>
<b class="msq" style="left:868px;top:929px;width:1px"></b>
<b class="ms" style="left:869px;top:929px;width:4px"></b>
<b class="ms" style="left:874px;top:929px;width:5px"></b>
<b class="msq" style="left:879px;top:929px;width:1px"></b>
<b class="mb" style="left:879px;top:929px;width:1px"></b>
<b class="mp" style="left:880px;top:929px;width:1px"></b>
<b class="mkq" style="left:859px;top:931px;width:1px"></b>
<b class="mk" style="left:860px;top:931px;width:6px"></b>
<b class="mkq" style="left:866px;top:931px;width:1px"></b>
<b class="mp" style="left:867px;top:931px;width:1px"></b>
<b class="mb" style="left:869px;top:931px;width:1px"></b>
<b class="mb" style="left:862px;top:933px;width:1px"></b>
<b class="mkq" style="left:865px;top:935px;width:1px"></b>
<b class="mk" style="left:866px;top:935px;width:10px"></b>
<b class="mkq" style="left:876px;top:935px;width:1px"></b>
<b class="mp" style="left:877px;top:935px;width:1px"></b>
<b class="msq" style="left:879px;top:935px;width:1px"></b>
<b class="ms" style="left:879px;top:935px;width:1px"></b>
<b class="msq" style="left:880px;top:935px;width:1px"></b>
<b class="mp" style="left:881px;top:935px;width:1px"></b>
<b class="mkq" style="left:865px;top:937px;width:1px"></b>
<b class="mk" style="left:866px;top:937px;width:4px"></b>
<b class="mkq" style="left:870px;top:937px;width:1px"></b>
<b class="mp" style="left:870px;top:937px;width:1px"></b>
<b class="mt" style="left:872px;top:937px;width:3px"></b>
<b class="mb" style="left:862px;top:939px;width:1px"></b>
<b class="mb" style="left:859px;top:941px;width:1px"></b>
<b class="mb" style="left:856px;top:943px;width:1px"></b>
<b class="mp" style="left:856px;top:943px;width:1px"></b>
<b class="mb" style="left:856px;top:945px;width:1px"></b>
<b class="mkq" style="left:859px;top:947px;width:1px"></b>
<b class="mk" style="left:860px;top:947px;width:3px"></b>
<b class="mkq" style="left:863px;top:947px;width:1px"></b>
<b class="mp" style="left:864px;top:947px;width:1px"></b>
<b class="msq" style="left:865px;top:947px;width:1px"></b>
<b class="ms" style="left:866px;top:947px;width:8px"></b>
<b class="msq" style="left:874px;top:947px;width:1px"></b>
<b class="mp" style="left:875px;top:947px;width:1px"></b>
<b class="mkq" style="left:859px;top:949px;width:1px"></b>
<b class="mk" style="left:860px;top:949px;width:5px"></b>
<b class="mkq" style="left:865px;top:949px;width:1px"></b>
<b class="mp" style="left:866px;top:949px;width:1px"></b>
<b class="msq" style="left:868px;top:949px;width:1px"></b>
<b class="ms" style="left:869px;top:949px;width:33px"></b>
<b class="msq" style="left:902px;top:949px;width:1px"></b>
<b class="mp" style="left:903px;top:949px;width:1px"></b>
<b class="mkq" style="left:859px;top:951px;width:1px"></b>
<b class="mk" style="left:860px;top:951px;width:5px"></b>
<b class="mkq" style="left:865px;top:951px;width:1px"></b>
<b class="mp" style="left:865px;top:951px;width:1px"></b>
<b class="mb" style="left:867px;top:951px;width:1px"></b>
<b class="msq" style="left:868px;top:951px;width:1px"></b>
<b class="ms" style="left:869px;top:951px;width:3px"></b>
<b class="ms" style="left:873px;top:951px;width:8px"></b>
<b class="msq" style="left:881px;top:951px;width:1px"></b>
<b class="mp" style="left:882px;top:951px;width:1px"></b>
<b class="msq" style="left:883px;top:951px;width:1px"></b>
<b class="ms" style="left:884px;top:951px;width:4px"></b>
<b class="ms" style="left:888px;top:951px;width:9px"></b>
<b class="msq" style="left:897px;top:951px;width:1px"></b>
<b class="mp" style="left:897px;top:951px;width:1px"></b>
<b class="msq" style="left:899px;top:951px;width:1px"></b>
<b class="ms" style="left:900px;top:951px;width:3px"></b>
<b class="ms" style="left:904px;top:951px;width:3px"></b>
<b class="msq" style="left:907px;top:951px;width:1px"></b>
<b class="mb" style="left:908px;top:951px;width:1px"></b>
<b class="mp" style="left:909px;top:951px;width:1px"></b>
<b class="mkq" style="left:859px;top:953px;width:1px"></b>
<b class="mk" style="left:860px;top:953px;width:6px"></b>
<b class="mkq" style="left:866px;top:953px;width:1px"></b>
<b class="mp" style="left:867px;top:953px;width:1px"></b>
<b class="mb" style="left:869px;top:953px;width:1px"></b>
<b class="mb" style="left:862px;top:955px;width:1px"></b>
<b class="mkq" style="left:865px;top:957px;width:1px"></b>
<b class="mk" style="left:866px;top:957px;width:10px"></b>
<b class="mkq" style="left:876px;top:957px;width:1px"></b>
<b class="mp" style="left:877px;top:957px;width:1px"></b>
<b class="msq" style="left:879px;top:957px;width:1px"></b>
<b class="ms" style="left:879px;top:957px;width:5px"></b>
<b class="msq" style="left:884px;top:957px;width:1px"></b>
<b class="mp" style="left:885px;top:957px;width:1px"></b>
<b class="mkq" style="left:865px;top:959px;width:1px"></b>
<b class="mk" style="left:866px;top:959px;width:4px"></b>
<b class="mkq" style="left:870px;top:959px;width:1px"></b>
<b class="mp" style="left:870px;top:959px;width:1px"></b>
<b class="mt" style="left:872px;top:959px;width:3px"></b>
<b class="mb" style="left:862px;top:961px;width:1px"></b>
<b class="mb" style="left:859px;top:963px;width:1px"></b>
<b class="mb" style="left:856px;top:965px;width:1px"></b>
<b class="mp" style="left:856px;top:965px;width:1px"></b>
<b class="mb" style="left:856px;top:967px;width:1px"></b>
<b class="mkq" style="left:859px;top:969px;width:1px"></b>
<b class="mk" style="left:860px;top:969px;width:3px"></b>
<b class="mkq" style="left:863px;top:969px;width:1px"></b>
<b class="mp" style="left:864px;top:969px;width:1px"></b>
<b class="msq" style="left:865px;top:969px;width:1px"></b>
<b class="ms" style="left:866px;top:969px;width:7px"></b>
<b class="ms" style="left:874px;top:969px;width:2px"></b>
<b class="ms" style="left:877px;top:969px;width:6px"></b>
<b class="msq" style="left:883px;top:969px;width:1px"></b>
<b class="mp" style="left:883px;top:969px;width:1px"></b>
<b class="mkq" style="left:859px;top:971px;width:1px"></b>
<b class="mk" style="left:860px;top:971px;width:5px"></b>
<b class="mkq" style="left:865px;top:971px;width:1px"></b>
<b class="mp" style="left:866px;top:971px;width:1px"></b>
<b class="msq" style="left:868px;top:971px;width:1px"></b>
<b class="ms" style="left:869px;top:971px;width:29px"></b>
<b class="msq" style="left:898px;top:971px;width:1px"></b>
<b class="mp" style="left:899px;top:971px;width:1px"></b>
<b class="mkq" style="left:859px;top:973px;width:1px"></b>
<b class="mk" style="left:860px;top:973px;width:5px"></b>
<b class="mkq" style="left:865px;top:973px;width:1px"></b>
<b class="mp" style="left:865px;top:973px;width:1px"></b>
<b class="mb" style="left:867px;top:973px;width:1px"></b>
<b class="msq" style="left:868px;top:973px;width:1px"></b>
<b class="ms" style="left:869px;top:973px;width:6px"></b>
<b class="ms" style="left:876px;top:973px;width:5px"></b>
<b class="msq" style="left:881px;top:973px;width:1px"></b>
<b class="mb" style="left:882px;top:973px;width:1px"></b>
<b class="mp" style="left:883px;top:973px;width:1px"></b>
<b class="mkq" style="left:859px;top:975px;width:1px"></b>
<b class="mk" style="left:860px;top:975px;width:6px"></b>
<b class="mkq" style="left:866px;top:975px;width:1px"></b>
<b class="mp" style="left:867px;top:975px;width:1px"></b>
<b class="mb" style="left:869px;top:975px;width:1px"></b>
<b class="mb" style="left:862px;top:977px;width:1px"></b>
<b class="mkq" style="left:865px;top:979px;width:1px"></b>
<b class="mk" style="left:866px;top:979px;width:10px"></b>
<b class="mkq" style="left:876px;top:979px;width:1px"></b>
<b class="mp" style="left:877px;top:979px;width:1px"></b>
<b class="msq" style="left:879px;top:979px;width:1px"></b>
<b class="ms" style="left:879px;top:979px;width:1px"></b>
<b class="msq" style="left:880px;top:979px;width:1px"></b>
<b class="mp" style="left:881px;top:979px;width:1px"></b>
<b class="mkq" style="left:865px;top:981px;width:1px"></b>
<b class="mk" style="left:866px;top:981px;width:4px"></b>
<b class="mkq" style="left:870px;top:981px;width:1px"></b>
<b class="mp" style="left:870px;top:981px;width:1px"></b>
<b class="mt" style="left:872px;top:981px;width:3px"></b>
<b class="mb" style="left:862px;top:983px;width:1px"></b>
<b class="mb" style="left:859px;top:985px;width:1px"></b>
<b class="mb" style="left:856px;top:987px;width:1px"></b>
<b class="mp" style="left:856px;top:987px;width:1px"></b>
<b class="mb" style="left:856px;top:989px;width:1px"></b>
<b class="mkq" style="left:859px;top:991px;width:1px"></b>
<b class="mk" style="left:860px;top:991px;width:3px"></b>
<b class="mkq" style="left:863px;top:991px;width:1px"></b>
<b class="mp" style="left:864px;top:991px;width:1px"></b>
<b class="msq" style="left:865px;top:991px;width:1px"></b>
<b class="ms" style="left:866px;top:991px;width:8px"></b>
<b class="ms" style="left:874px;top:991px;width:7px"></b>
<b class="msq" style="left:882px;top:991px;width:1px"></b>
<b class="mp" style="left:883px;top:991px;width:1px"></b>
<b class="mkq" style="left:859px;top:993px;width:1px"></b>
<b class="mk" style="left:860px;top:993px;width:5px"></b>
<b class="mkq" style="left:865px;top:993px;width:1px"></b>
<b class="mp" style="left:866px;top:993px;width:1px"></b>
<b class="msq" style="left:868px;top:993px;width:1px"></b>
<b class="ms" style="left:869px;top:993px;width:46px"></b>
<b class="msq" style="left:915px;top:993px;width:1px"></b>
<b class="mp" style="left:916px;top:993px;width:1px"></b>
<b class="mkq" style="left:859px;top:995px;width:1px"></b>
<b class="mk" style="left:860px;top:995px;width:5px"></b>
<b class="mkq" style="left:865px;top:995px;width:1px"></b>
<b class="mp" style="left:865px;top:995px;width:1px"></b>
<b class="mb" style="left:867px;top:995px;width:1px"></b>
<b class="msq" style="left:868px;top:995px;width:1px"></b>
<b class="ms" style="left:869px;top:995px;width:7px"></b>
<b class="ms" style="left:877px;top:995px;width:4px"></b>
<b class="msq" style="left:881px;top:995px;width:1px"></b>
<b class="mb" style="left:882px;top:995px;width:1px"></b>
<b class="mp" style="left:883px;top:995px;width:1px"></b>
<b class="mkq" style="left:859px;top:997px;width:1px"></b>
<b class="mk" style="left:860px;top:997px;width:6px"></b>
<b class="mkq" style="left:866px;top:997px;width:1px"></b>
<b class="mp" style="left:867px;top:997px;width:1px"></b>
<b class="mb" style="left:869px;top:997px;width:1px"></b>
<b class="mb" style="left:862px;top:999px;width:1px"></b>
<b class="mkq" style="left:865px;top:1001px;width:1px"></b>
<b class="mk" style="left:866px;top:1001px;width:10px"></b>
<b class="mkq" style="left:876px;top:1001px;width:1px"></b>
<b class="mp" style="left:877px;top:1001px;width:1px"></b>
<b class="msq" style="left:879px;top:1001px;width:1px"></b>
<b class="ms" style="left:879px;top:1001px;width:1px"></b>
<b class="msq" style="left:880px;top:1001px;width:1px"></b>
<b class="mp" style="left:881px;top:1001px;width:1px"></b>
<b class="mkq" style="left:865px;top:1003px;width:1px"></b>
<b class="mk" style="left:866px;top:1003px;width:4px"></b>
<b class="mkq" style="left:870px;top:1003px;width:1px"></b>
<b class="mp" style="left:870px;top:1003px;width:1px"></b>
<b class="mt" style="left:872px;top:1003px;width:3px"></b>
<b class="mb" style="left:862px;top:1005px;width:1px"></b>
<b class="mb" style="left:859px;top:1007px;width:1px"></b>
<b class="mb" style="left:856px;top:1009px;width:1px"></b>
<b class="mp" style="left:856px;top:1009px;width:1px"></b>
<b class="mb" style="left:856px;top:1011px;width:1px"></b>
<b class="mkq" style="left:859px;top:1013px;width:1px"></b>
<b class="mk" style="left:860px;top:1013px;width:3px"></b>
<b class="mkq" style="left:863px;top:1013px;width:1px"></b>
<b class="mp" style="left:864px;top:1013px;width:1px"></b>
<b class="msq" style="left:865px;top:1013px;width:1px"></b>
<b class="ms" style="left:866px;top:1013px;width:8px"></b>
<b class="ms" style="left:874px;top:1013px;width:3px"></b>
<b class="msq" style="left:877px;top:1013px;width:1px"></b>
<b class="mp" style="left:878px;top:1013px;width:1px"></b></div>
  <div class="abs" style="left:945px;top:69px;width:7px;height:942px;border-radius:4px;background:#24272c"></div>
  <div class="abs" style="left:945px;top:918px;width:7px;height:31px;border-radius:4px;background:#53565a"></div>
  <div class="abs" style="left:8px;top:1019px;width:929px;height:7px;border-radius:4px;background:#24272c"></div>
  <div class="abs" style="left:8px;top:1019px;width:825px;height:7px;border-radius:4px;background:#53575a"></div>
 </div>
</div>
<div id="status" class="abs">
<svg class="abs" style="left:11px;top:5px" width="16" height="14"><rect x="0.7" y="0.7" width="13.6" height="12" rx="2" fill="none" stroke="#8e9094" stroke-width="1.4"/><rect x="0.7" y="0.7" width="5" height="12" rx="1" fill="#8e9094"/></svg>
<div class="st" style="left:36px;letter-spacing:-0.36px">5 lines, 56 characters selected</div>
<svg class="abs" style="left:663px;top:4px" width="12" height="14"><circle cx="2.5" cy="2.3" r="1.6" fill="#c0c2c6"/><circle cx="8" cy="3.2" r="1.6" fill="#c0c2c6"/><circle cx="2.5" cy="11.4" r="1.6" fill="#c0c2c6"/><path d="M2.5,2.3 V11.4 M8,3.2 C8,6.5 2.5,7.5 2.5,9.5" fill="none" stroke="#c0c2c6" stroke-width="1.2"/></svg>
<div class="st" style="left:676px">master</div>
<div class="abs" style="left:716px;top:4px;width:9px;height:12px;border:1px solid #9a9ca0;border-radius:3px;font-size:11px;line-height:12px;text-align:center;color:#c9cbcf">1</div>
<div class="st" style="left:768px;letter-spacing:-0.6px">Tab Size: 4</div>
<div class="st" style="left:881px;letter-spacing:-1.3px">JSON</div>
</div>
</body></html>
